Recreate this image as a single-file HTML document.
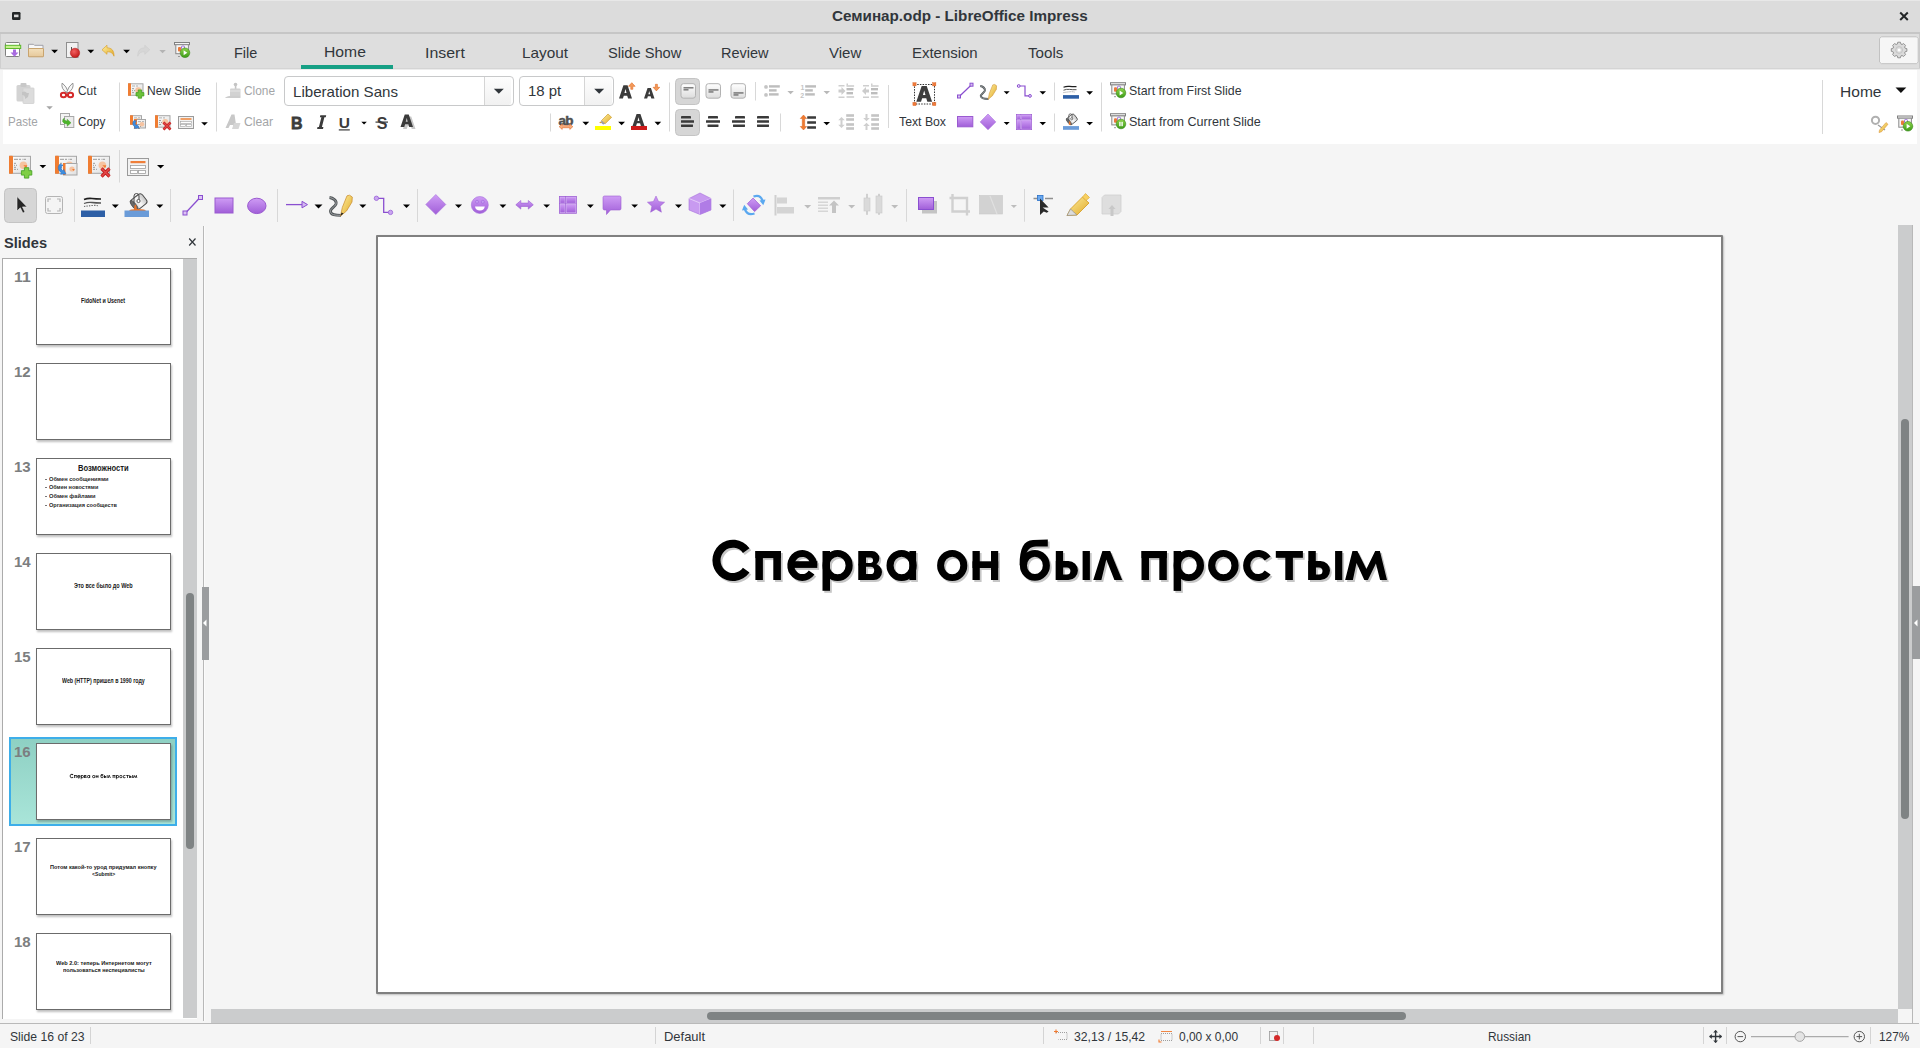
<!DOCTYPE html>
<html><head><meta charset="utf-8"><style>
html,body{margin:0;padding:0;}
body{width:1920px;height:1048px;overflow:hidden;position:relative;background:#f5f5f5;font-family:"Liberation Sans",sans-serif;}
body>div,body>span,body>svg{position:absolute;}
.t{white-space:nowrap;transform-origin:0 0;}
</style></head><body>
<div style="left:0px;top:0px;width:1920px;height:1px;background:#e8e8e8"></div>
<div style="left:0px;top:1px;width:1920px;height:31px;background:#dcdcdc"></div>
<div style="left:0px;top:32px;width:1920px;height:2px;background:#c6c6c6"></div>
<div style="left:0px;top:34px;width:1920px;height:35px;background:#dedede"></div>
<div style="left:0px;top:34px;width:1px;height:35px;background:#cfcfcf"></div>
<div style="left:1919px;top:34px;width:1px;height:35px;background:#cacaca"></div>
<div style="left:0px;top:68px;width:1920px;height:1px;background:#d4d4d4"></div>
<div style="left:0px;top:69px;width:1920px;height:1px;background:#ececec"></div>
<div style="left:301px;top:65px;width:92px;height:4px;background:#16a085"></div>
<div style="left:3px;top:70px;width:1914px;height:74px;background:#ffffff"></div>
<span class="t" style="left:832.40px;top:9.45px;font-size:14px;line-height:14px;font-weight:700;color:#31363b;transform:scaleX(1.0879);">Семинар.odp - LibreOffice Impress</span>
<span class="t" style="left:234.00px;top:45.30px;font-size:15px;line-height:15px;font-weight:400;color:#31363b;transform:scaleX(0.9642);">File</span>
<span class="t" style="left:323.70px;top:44.30px;font-size:15px;line-height:15px;font-weight:400;color:#31363b;transform:scaleX(1.0470);">Home</span>
<span class="t" style="left:425.40px;top:45.30px;font-size:15px;line-height:15px;font-weight:400;color:#31363b;transform:scaleX(1.0609);">Insert</span>
<span class="t" style="left:522.10px;top:45.30px;font-size:15px;line-height:15px;font-weight:400;color:#31363b;transform:scaleX(1.0227);">Layout</span>
<span class="t" style="left:608.00px;top:45.30px;font-size:15px;line-height:15px;font-weight:400;color:#31363b;transform:scaleX(0.9775);">Slide Show</span>
<span class="t" style="left:721.30px;top:45.30px;font-size:15px;line-height:15px;font-weight:400;color:#31363b;transform:scaleX(0.9669);">Review</span>
<span class="t" style="left:828.80px;top:45.30px;font-size:15px;line-height:15px;font-weight:400;color:#31363b;transform:scaleX(1.0006);">View</span>
<span class="t" style="left:912.20px;top:45.30px;font-size:15px;line-height:15px;font-weight:400;color:#31363b;transform:scaleX(0.9957);">Extension</span>
<span class="t" style="left:1027.80px;top:45.30px;font-size:15px;line-height:15px;font-weight:400;color:#31363b;transform:scaleX(1.0097);">Tools</span>
<span class="t" style="left:78.10px;top:83.57px;font-size:13.5px;line-height:13.5px;font-weight:400;color:#31363b;transform:scaleX(0.8807);">Cut</span>
<span class="t" style="left:78.10px;top:114.57px;font-size:13.5px;line-height:13.5px;font-weight:400;color:#31363b;transform:scaleX(0.8664);">Copy</span>
<span class="t" style="left:7.90px;top:114.97px;font-size:13.5px;line-height:13.5px;font-weight:400;color:#a3a5a7;transform:scaleX(0.8604);">Paste</span>
<span class="t" style="left:146.70px;top:83.57px;font-size:13.5px;line-height:13.5px;font-weight:400;color:#31363b;transform:scaleX(0.8885);">New Slide</span>
<span class="t" style="left:243.70px;top:83.57px;font-size:13.5px;line-height:13.5px;font-weight:400;color:#a3a5a7;transform:scaleX(0.8788);">Clone</span>
<span class="t" style="left:243.70px;top:114.57px;font-size:13.5px;line-height:13.5px;font-weight:400;color:#a3a5a7;transform:scaleX(0.9019);">Clear</span>
<span class="t" style="left:898.65px;top:114.82px;font-size:13.5px;line-height:13.5px;font-weight:400;color:#31363b;transform:scaleX(0.9078);">Text Box</span>
<span class="t" style="left:1128.90px;top:84.07px;font-size:13.5px;line-height:13.5px;font-weight:400;color:#31363b;transform:scaleX(0.9144);">Start from First Slide</span>
<span class="t" style="left:1128.90px;top:114.82px;font-size:13.5px;line-height:13.5px;font-weight:400;color:#31363b;transform:scaleX(0.9292);">Start from Current Slide</span>
<span class="t" style="left:1839.90px;top:84.30px;font-size:15px;line-height:15px;font-weight:400;color:#31363b;transform:scaleX(1.0370);">Home</span>
<div style="left:284px;top:76px;width:228px;height:28px;border:1px solid #c8c9ca;border-radius:4px;background:#fff"></div>
<div style="left:484px;top:77px;width:1px;height:28px;background:#d5d5d5"></div>
<div style="left:485px;top:77px;width:26px;height:28px;background:linear-gradient(#fdfdfd,#f1f1f1);border-radius:0 3px 3px 0"></div>
<span class="t" style="left:292.90px;top:83.60px;font-size:15px;line-height:15px;font-weight:400;color:#31363b;transform:scaleX(1.0073);">Liberation Sans</span>
<div style="left:519px;top:76px;width:93px;height:28px;border:1px solid #c8c9ca;border-radius:4px;background:#fff"></div>
<div style="left:584px;top:77px;width:1px;height:28px;background:#d5d5d5"></div>
<div style="left:585px;top:77px;width:27px;height:28px;background:linear-gradient(#fdfdfd,#f1f1f1);border-radius:0 3px 3px 0"></div>
<span class="t" style="left:528.15px;top:83.10px;font-size:15px;line-height:15px;font-weight:400;color:#31363b;transform:scaleX(0.9967);">18 pt</span>
<span class="t" style="left:3.60px;top:235.73px;font-size:14.5px;line-height:14.5px;font-weight:700;color:#31363b;transform:scaleX(1.0066);">Slides</span>
<div style="left:203px;top:226px;width:1px;height:795px;background:#b8b8b8"></div>
<div style="left:204px;top:226px;width:1px;height:795px;background:#fbfbfb"></div>
<div style="left:2px;top:258px;width:195px;height:761px;background:#ffffff;border-left:1px solid #ababab;box-sizing:border-box"></div>
<div style="left:183px;top:259px;width:14px;height:759px;background:#cbcccd"></div>
<div style="left:2px;top:258px;width:195px;height:1px;background:#ababab"></div>
<div style="left:186px;top:593px;width:7.5px;height:256px;background:#7f8384;border-radius:4px"></div>
<div style="left:202px;top:587px;width:7px;height:73px;background:#9b9d9f"></div>
<div style="left:36px;top:268px;width:135px;height:77px;background:#fff;border:1px solid #6b6b6b;box-sizing:border-box;box-shadow:1px 2px 2px rgba(0,0,0,0.25)"></div>
<span class="t" style="left:14.30px;top:270.15px;font-size:14px;line-height:14px;font-weight:700;color:#7c7e80;transform:scaleX(1.1285);">11</span>
<div style="left:36px;top:363px;width:135px;height:77px;background:#fff;border:1px solid #6b6b6b;box-sizing:border-box;box-shadow:1px 2px 2px rgba(0,0,0,0.25)"></div>
<span class="t" style="left:14.30px;top:365.15px;font-size:14px;line-height:14px;font-weight:700;color:#7c7e80;transform:scaleX(1.0727);">12</span>
<div style="left:36px;top:458px;width:135px;height:77px;background:#fff;border:1px solid #6b6b6b;box-sizing:border-box;box-shadow:1px 2px 2px rgba(0,0,0,0.25)"></div>
<span class="t" style="left:14.30px;top:460.15px;font-size:14px;line-height:14px;font-weight:700;color:#7c7e80;transform:scaleX(1.0727);">13</span>
<div style="left:36px;top:553px;width:135px;height:77px;background:#fff;border:1px solid #6b6b6b;box-sizing:border-box;box-shadow:1px 2px 2px rgba(0,0,0,0.25)"></div>
<span class="t" style="left:14.30px;top:555.15px;font-size:14px;line-height:14px;font-weight:700;color:#7c7e80;transform:scaleX(1.0727);">14</span>
<div style="left:36px;top:648px;width:135px;height:77px;background:#fff;border:1px solid #6b6b6b;box-sizing:border-box;box-shadow:1px 2px 2px rgba(0,0,0,0.25)"></div>
<span class="t" style="left:14.30px;top:650.15px;font-size:14px;line-height:14px;font-weight:700;color:#7c7e80;transform:scaleX(1.0727);">15</span>
<div style="left:9px;top:737px;width:168px;height:89px;background:linear-gradient(#8ed0c3,#a9e5d9);border:2px solid #3daee9;box-sizing:border-box"></div>
<div style="left:36px;top:743px;width:135px;height:77px;background:#fff;border:1px solid #6b6b6b;box-sizing:border-box;box-shadow:1px 2px 2px rgba(0,0,0,0.25)"></div>
<span class="t" style="left:14.30px;top:745.15px;font-size:14px;line-height:14px;font-weight:700;color:#7c7e80;transform:scaleX(1.0727);">16</span>
<div style="left:36px;top:838px;width:135px;height:77px;background:#fff;border:1px solid #6b6b6b;box-sizing:border-box;box-shadow:1px 2px 2px rgba(0,0,0,0.25)"></div>
<span class="t" style="left:14.30px;top:840.15px;font-size:14px;line-height:14px;font-weight:700;color:#7c7e80;transform:scaleX(1.0727);">17</span>
<div style="left:36px;top:933px;width:135px;height:77px;background:#fff;border:1px solid #6b6b6b;box-sizing:border-box;box-shadow:1px 2px 2px rgba(0,0,0,0.25)"></div>
<span class="t" style="left:14.30px;top:935.15px;font-size:14px;line-height:14px;font-weight:700;color:#7c7e80;transform:scaleX(1.0727);">18</span>
<span class="t" style="left:80.80px;top:297.91px;font-size:6.6px;line-height:6.6px;font-weight:700;color:#1a1a1a;transform:scaleX(0.8122);">FidoNet и Usenet</span>
<span class="t" style="left:77.70px;top:464.39px;font-size:8.4px;line-height:8.4px;font-weight:700;color:#1a1a1a;transform:scaleX(0.9042);">Возможности</span>
<span class="t" style="left:48.90px;top:477.09px;font-size:5.8px;line-height:5.8px;font-weight:700;color:#2a2a2a;transform:scaleX(0.9775);">Обмен сообщениями</span>
<div style="left:45px;top:479px;width:2px;height:1px;background:#777"></div>
<span class="t" style="left:48.90px;top:485.29px;font-size:5.8px;line-height:5.8px;font-weight:700;color:#2a2a2a;transform:scaleX(0.9489);">Обмен новостями</span>
<div style="left:45px;top:487px;width:2px;height:1px;background:#777"></div>
<span class="t" style="left:48.90px;top:494.09px;font-size:5.8px;line-height:5.8px;font-weight:700;color:#2a2a2a;transform:scaleX(0.9856);">Обмен файлами</span>
<div style="left:45px;top:496px;width:2px;height:1px;background:#777"></div>
<span class="t" style="left:48.90px;top:503.19px;font-size:5.8px;line-height:5.8px;font-weight:700;color:#2a2a2a;transform:scaleX(0.9632);">Организация сообществ</span>
<div style="left:45px;top:505px;width:2px;height:1px;background:#777"></div>
<span class="t" style="left:73.90px;top:583.01px;font-size:6.6px;line-height:6.6px;font-weight:700;color:#1a1a1a;transform:scaleX(0.8361);">Это все было до Web</span>
<span class="t" style="left:61.90px;top:678.11px;font-size:6.6px;line-height:6.6px;font-weight:700;color:#1a1a1a;transform:scaleX(0.8022);">Web (HTTP) пришел в 1990 году</span>
<span class="t" style="left:49.90px;top:864.42px;font-size:6.0px;line-height:6.0px;font-weight:700;color:#1a1a1a;transform:scaleX(0.9283);">Потом какой-то урод придумал кнопку</span>
<span class="t" style="left:91.50px;top:871.12px;font-size:6.0px;line-height:6.0px;font-weight:700;color:#1a1a1a;transform:scaleX(0.8522);">&lt;Submit&gt;</span>
<span class="t" style="left:55.70px;top:959.62px;font-size:6.0px;line-height:6.0px;font-weight:700;color:#1a1a1a;transform:scaleX(0.9321);">Web 2.0: теперь Интернетом могут</span>
<span class="t" style="left:62.80px;top:966.72px;font-size:6.0px;line-height:6.0px;font-weight:700;color:#1a1a1a;transform:scaleX(0.9077);">пользоваться неспециалисты</span>
<div style="left:376px;top:235px;width:1347px;height:759px;background:#fff;border:2px solid #808080;border-radius:1px;box-sizing:border-box;box-shadow:1px 1px 2px rgba(0,0,0,0.22)"></div>
<svg style="left:0;top:0;position:absolute" width="1920" height="1048" viewBox="0 0 1920 1048"><g transform="translate(1.8 2)" fill="#c6c6c6"><path d="M749.48 572.49A20.5 20.65 0 1 1 749.48 548.21L742.93 552.89A12.4 12.7 0 1 0 742.93 567.81Z" fill-rule="evenodd"/><path d="M755.40 551.00H780.90V558.10H755.40Z" fill-rule="evenodd"/><path d="M755.40 551.00H762.90V580.00H755.40Z" fill-rule="evenodd"/><path d="M773.30 551.00H780.90V580.00H773.30Z" fill-rule="evenodd"/><path d="M814.44 574.61A15.0 15.5 0 1 1 817.30 565.50L810.30 565.50A8.0 8.6 0 1 0 808.77 570.55Z" fill-rule="evenodd"/><path d="M794.00 561.20H817.30V567.90H794.00Z" fill-rule="evenodd"/><path d="M822.50 551.00H830.00V590.80H822.50Z" fill-rule="evenodd"/><path d="M822.50 565.50A15.10 15.50 0 1 1 852.70 565.50A15.10 15.50 0 1 1 822.50 565.50ZM829.60 565.50A8.00 8.70 0 1 0 845.60 565.50A8.00 8.70 0 1 0 829.60 565.50Z" fill-rule="evenodd"/><path d="M858.50 551.00H872.10A7.30 7.30 0 0 1 872.10 565.60H858.50ZM866.00 557.60V563.00H870.30A2.70 2.70 0 0 0 870.30 557.60Z" fill-rule="evenodd"/><path d="M858.50 563.80H873.90A8.10 8.10 0 0 1 873.90 580.00H858.50ZM866.00 566.80V574.00H870.60A3.60 3.60 0 0 0 870.60 566.80Z" fill-rule="evenodd"/><path d="M858.50 551.00H866.00V580.00H858.50Z" fill-rule="evenodd"/><path d="M886.50 565.50A15.10 15.50 0 1 1 916.70 565.50A15.10 15.50 0 1 1 886.50 565.50ZM893.60 565.50A8.00 8.70 0 1 0 909.60 565.50A8.00 8.70 0 1 0 893.60 565.50Z" fill-rule="evenodd"/><path d="M909.40 551.00H916.10V580.00H909.40Z" fill-rule="evenodd"/><path d="M937.10 565.50A15.10 15.60 0 1 1 967.30 565.50A15.10 15.60 0 1 1 937.10 565.50ZM944.10 565.50A8.10 8.70 0 1 0 960.30 565.50A8.10 8.70 0 1 0 944.10 565.50Z" fill-rule="evenodd"/><path d="M972.50 551.00H979.80V580.00H972.50Z" fill-rule="evenodd"/><path d="M991.00 551.00H998.20V580.00H991.00Z" fill-rule="evenodd"/><path d="M972.50 561.30H998.20V568.00H972.50Z" fill-rule="evenodd"/><path d="M1019.90 565.40A15.00 15.40 0 1 1 1049.90 565.40A15.00 15.40 0 1 1 1019.90 565.40ZM1027.00 565.40A7.90 8.70 0 1 0 1042.80 565.40A7.90 8.70 0 1 0 1027.00 565.40Z" fill-rule="evenodd"/><path d="M1047.8 539.5V546.4H1036C1030 546.6 1026.6 550 1025.4 557.5L1019.6 565.4C1019.6 548 1024 540.3 1033 540Z" fill-rule="evenodd"/><path d="M1055.80 551.00H1063.10V580.00H1055.80Z" fill-rule="evenodd"/><path d="M1055.80 561.00H1068.40A9.50 9.50 0 0 1 1068.40 580.00H1055.80ZM1063.10 567.50V574.60H1066.85A3.55 3.55 0 0 0 1066.85 567.50Z" fill-rule="evenodd"/><path d="M1082.60 551.00H1089.90V580.00H1082.60Z" fill-rule="evenodd"/><path d="M1093.3 580L1102.4 551H1110.2L1122.2 580H1114.4L1106.3 559.5L1101.4 580Z" fill-rule="evenodd"/><path d="M1141.50 551.00H1166.80V558.10H1141.50Z" fill-rule="evenodd"/><path d="M1141.50 551.00H1149.00V580.00H1141.50Z" fill-rule="evenodd"/><path d="M1159.30 551.00H1166.80V580.00H1159.30Z" fill-rule="evenodd"/><path d="M1173.60 551.00H1181.10V590.90H1173.60Z" fill-rule="evenodd"/><path d="M1173.60 565.50A15.20 15.50 0 1 1 1204.00 565.50A15.20 15.50 0 1 1 1173.60 565.50ZM1180.80 565.50A8.00 8.70 0 1 0 1196.80 565.50A8.00 8.70 0 1 0 1180.80 565.50Z" fill-rule="evenodd"/><path d="M1208.10 565.50A15.25 15.60 0 1 1 1238.60 565.50A15.25 15.60 0 1 1 1208.10 565.50ZM1215.25 565.50A8.10 8.70 0 1 0 1231.45 565.50A8.10 8.70 0 1 0 1215.25 565.50Z" fill-rule="evenodd"/><path d="M1270.60 574.61A15.2 15.5 0 1 1 1270.60 556.39L1264.77 560.45A8.0 8.6 0 1 0 1264.77 570.55Z" fill-rule="evenodd"/><path d="M1275.80 551.00H1302.90V557.80H1275.80Z" fill-rule="evenodd"/><path d="M1285.30 551.00H1292.90V580.00H1285.30Z" fill-rule="evenodd"/><path d="M1308.30 551.00H1315.80V580.00H1308.30Z" fill-rule="evenodd"/><path d="M1308.30 561.00H1320.50A9.50 9.50 0 0 1 1320.50 580.00H1308.30ZM1315.80 567.50V574.60H1318.95A3.55 3.55 0 0 0 1318.95 567.50Z" fill-rule="evenodd"/><path d="M1335.10 551.00H1342.30V580.00H1335.10Z" fill-rule="evenodd"/><path d="M1345.15 580L1352.45 551H1357.4L1366.4 569L1375.2 551H1379.9L1387 580H1380.1L1375.9 563.5L1367.9 580H1364.3L1356.5 563L1352.9 580Z" fill-rule="evenodd"/></g><g fill="#000"><path d="M749.48 572.49A20.5 20.65 0 1 1 749.48 548.21L742.93 552.89A12.4 12.7 0 1 0 742.93 567.81Z" fill-rule="evenodd"/><path d="M755.40 551.00H780.90V558.10H755.40Z" fill-rule="evenodd"/><path d="M755.40 551.00H762.90V580.00H755.40Z" fill-rule="evenodd"/><path d="M773.30 551.00H780.90V580.00H773.30Z" fill-rule="evenodd"/><path d="M814.44 574.61A15.0 15.5 0 1 1 817.30 565.50L810.30 565.50A8.0 8.6 0 1 0 808.77 570.55Z" fill-rule="evenodd"/><path d="M794.00 561.20H817.30V567.90H794.00Z" fill-rule="evenodd"/><path d="M822.50 551.00H830.00V590.80H822.50Z" fill-rule="evenodd"/><path d="M822.50 565.50A15.10 15.50 0 1 1 852.70 565.50A15.10 15.50 0 1 1 822.50 565.50ZM829.60 565.50A8.00 8.70 0 1 0 845.60 565.50A8.00 8.70 0 1 0 829.60 565.50Z" fill-rule="evenodd"/><path d="M858.50 551.00H872.10A7.30 7.30 0 0 1 872.10 565.60H858.50ZM866.00 557.60V563.00H870.30A2.70 2.70 0 0 0 870.30 557.60Z" fill-rule="evenodd"/><path d="M858.50 563.80H873.90A8.10 8.10 0 0 1 873.90 580.00H858.50ZM866.00 566.80V574.00H870.60A3.60 3.60 0 0 0 870.60 566.80Z" fill-rule="evenodd"/><path d="M858.50 551.00H866.00V580.00H858.50Z" fill-rule="evenodd"/><path d="M886.50 565.50A15.10 15.50 0 1 1 916.70 565.50A15.10 15.50 0 1 1 886.50 565.50ZM893.60 565.50A8.00 8.70 0 1 0 909.60 565.50A8.00 8.70 0 1 0 893.60 565.50Z" fill-rule="evenodd"/><path d="M909.40 551.00H916.10V580.00H909.40Z" fill-rule="evenodd"/><path d="M937.10 565.50A15.10 15.60 0 1 1 967.30 565.50A15.10 15.60 0 1 1 937.10 565.50ZM944.10 565.50A8.10 8.70 0 1 0 960.30 565.50A8.10 8.70 0 1 0 944.10 565.50Z" fill-rule="evenodd"/><path d="M972.50 551.00H979.80V580.00H972.50Z" fill-rule="evenodd"/><path d="M991.00 551.00H998.20V580.00H991.00Z" fill-rule="evenodd"/><path d="M972.50 561.30H998.20V568.00H972.50Z" fill-rule="evenodd"/><path d="M1019.90 565.40A15.00 15.40 0 1 1 1049.90 565.40A15.00 15.40 0 1 1 1019.90 565.40ZM1027.00 565.40A7.90 8.70 0 1 0 1042.80 565.40A7.90 8.70 0 1 0 1027.00 565.40Z" fill-rule="evenodd"/><path d="M1047.8 539.5V546.4H1036C1030 546.6 1026.6 550 1025.4 557.5L1019.6 565.4C1019.6 548 1024 540.3 1033 540Z" fill-rule="evenodd"/><path d="M1055.80 551.00H1063.10V580.00H1055.80Z" fill-rule="evenodd"/><path d="M1055.80 561.00H1068.40A9.50 9.50 0 0 1 1068.40 580.00H1055.80ZM1063.10 567.50V574.60H1066.85A3.55 3.55 0 0 0 1066.85 567.50Z" fill-rule="evenodd"/><path d="M1082.60 551.00H1089.90V580.00H1082.60Z" fill-rule="evenodd"/><path d="M1093.3 580L1102.4 551H1110.2L1122.2 580H1114.4L1106.3 559.5L1101.4 580Z" fill-rule="evenodd"/><path d="M1141.50 551.00H1166.80V558.10H1141.50Z" fill-rule="evenodd"/><path d="M1141.50 551.00H1149.00V580.00H1141.50Z" fill-rule="evenodd"/><path d="M1159.30 551.00H1166.80V580.00H1159.30Z" fill-rule="evenodd"/><path d="M1173.60 551.00H1181.10V590.90H1173.60Z" fill-rule="evenodd"/><path d="M1173.60 565.50A15.20 15.50 0 1 1 1204.00 565.50A15.20 15.50 0 1 1 1173.60 565.50ZM1180.80 565.50A8.00 8.70 0 1 0 1196.80 565.50A8.00 8.70 0 1 0 1180.80 565.50Z" fill-rule="evenodd"/><path d="M1208.10 565.50A15.25 15.60 0 1 1 1238.60 565.50A15.25 15.60 0 1 1 1208.10 565.50ZM1215.25 565.50A8.10 8.70 0 1 0 1231.45 565.50A8.10 8.70 0 1 0 1215.25 565.50Z" fill-rule="evenodd"/><path d="M1270.60 574.61A15.2 15.5 0 1 1 1270.60 556.39L1264.77 560.45A8.0 8.6 0 1 0 1264.77 570.55Z" fill-rule="evenodd"/><path d="M1275.80 551.00H1302.90V557.80H1275.80Z" fill-rule="evenodd"/><path d="M1285.30 551.00H1292.90V580.00H1285.30Z" fill-rule="evenodd"/><path d="M1308.30 551.00H1315.80V580.00H1308.30Z" fill-rule="evenodd"/><path d="M1308.30 561.00H1320.50A9.50 9.50 0 0 1 1320.50 580.00H1308.30ZM1315.80 567.50V574.60H1318.95A3.55 3.55 0 0 0 1318.95 567.50Z" fill-rule="evenodd"/><path d="M1335.10 551.00H1342.30V580.00H1335.10Z" fill-rule="evenodd"/><path d="M1345.15 580L1352.45 551H1357.4L1366.4 569L1375.2 551H1379.9L1387 580H1380.1L1375.9 563.5L1367.9 580H1364.3L1356.5 563L1352.9 580Z" fill-rule="evenodd"/></g><g transform="translate(36 743) scale(0.1002 0.1016) translate(-376 -235)" fill="#111"><path d="M749.48 572.49A20.5 20.65 0 1 1 749.48 548.21L742.93 552.89A12.4 12.7 0 1 0 742.93 567.81Z" fill-rule="evenodd"/><path d="M755.40 551.00H780.90V558.10H755.40Z" fill-rule="evenodd"/><path d="M755.40 551.00H762.90V580.00H755.40Z" fill-rule="evenodd"/><path d="M773.30 551.00H780.90V580.00H773.30Z" fill-rule="evenodd"/><path d="M814.44 574.61A15.0 15.5 0 1 1 817.30 565.50L810.30 565.50A8.0 8.6 0 1 0 808.77 570.55Z" fill-rule="evenodd"/><path d="M794.00 561.20H817.30V567.90H794.00Z" fill-rule="evenodd"/><path d="M822.50 551.00H830.00V590.80H822.50Z" fill-rule="evenodd"/><path d="M822.50 565.50A15.10 15.50 0 1 1 852.70 565.50A15.10 15.50 0 1 1 822.50 565.50ZM829.60 565.50A8.00 8.70 0 1 0 845.60 565.50A8.00 8.70 0 1 0 829.60 565.50Z" fill-rule="evenodd"/><path d="M858.50 551.00H872.10A7.30 7.30 0 0 1 872.10 565.60H858.50ZM866.00 557.60V563.00H870.30A2.70 2.70 0 0 0 870.30 557.60Z" fill-rule="evenodd"/><path d="M858.50 563.80H873.90A8.10 8.10 0 0 1 873.90 580.00H858.50ZM866.00 566.80V574.00H870.60A3.60 3.60 0 0 0 870.60 566.80Z" fill-rule="evenodd"/><path d="M858.50 551.00H866.00V580.00H858.50Z" fill-rule="evenodd"/><path d="M886.50 565.50A15.10 15.50 0 1 1 916.70 565.50A15.10 15.50 0 1 1 886.50 565.50ZM893.60 565.50A8.00 8.70 0 1 0 909.60 565.50A8.00 8.70 0 1 0 893.60 565.50Z" fill-rule="evenodd"/><path d="M909.40 551.00H916.10V580.00H909.40Z" fill-rule="evenodd"/><path d="M937.10 565.50A15.10 15.60 0 1 1 967.30 565.50A15.10 15.60 0 1 1 937.10 565.50ZM944.10 565.50A8.10 8.70 0 1 0 960.30 565.50A8.10 8.70 0 1 0 944.10 565.50Z" fill-rule="evenodd"/><path d="M972.50 551.00H979.80V580.00H972.50Z" fill-rule="evenodd"/><path d="M991.00 551.00H998.20V580.00H991.00Z" fill-rule="evenodd"/><path d="M972.50 561.30H998.20V568.00H972.50Z" fill-rule="evenodd"/><path d="M1019.90 565.40A15.00 15.40 0 1 1 1049.90 565.40A15.00 15.40 0 1 1 1019.90 565.40ZM1027.00 565.40A7.90 8.70 0 1 0 1042.80 565.40A7.90 8.70 0 1 0 1027.00 565.40Z" fill-rule="evenodd"/><path d="M1047.8 539.5V546.4H1036C1030 546.6 1026.6 550 1025.4 557.5L1019.6 565.4C1019.6 548 1024 540.3 1033 540Z" fill-rule="evenodd"/><path d="M1055.80 551.00H1063.10V580.00H1055.80Z" fill-rule="evenodd"/><path d="M1055.80 561.00H1068.40A9.50 9.50 0 0 1 1068.40 580.00H1055.80ZM1063.10 567.50V574.60H1066.85A3.55 3.55 0 0 0 1066.85 567.50Z" fill-rule="evenodd"/><path d="M1082.60 551.00H1089.90V580.00H1082.60Z" fill-rule="evenodd"/><path d="M1093.3 580L1102.4 551H1110.2L1122.2 580H1114.4L1106.3 559.5L1101.4 580Z" fill-rule="evenodd"/><path d="M1141.50 551.00H1166.80V558.10H1141.50Z" fill-rule="evenodd"/><path d="M1141.50 551.00H1149.00V580.00H1141.50Z" fill-rule="evenodd"/><path d="M1159.30 551.00H1166.80V580.00H1159.30Z" fill-rule="evenodd"/><path d="M1173.60 551.00H1181.10V590.90H1173.60Z" fill-rule="evenodd"/><path d="M1173.60 565.50A15.20 15.50 0 1 1 1204.00 565.50A15.20 15.50 0 1 1 1173.60 565.50ZM1180.80 565.50A8.00 8.70 0 1 0 1196.80 565.50A8.00 8.70 0 1 0 1180.80 565.50Z" fill-rule="evenodd"/><path d="M1208.10 565.50A15.25 15.60 0 1 1 1238.60 565.50A15.25 15.60 0 1 1 1208.10 565.50ZM1215.25 565.50A8.10 8.70 0 1 0 1231.45 565.50A8.10 8.70 0 1 0 1215.25 565.50Z" fill-rule="evenodd"/><path d="M1270.60 574.61A15.2 15.5 0 1 1 1270.60 556.39L1264.77 560.45A8.0 8.6 0 1 0 1264.77 570.55Z" fill-rule="evenodd"/><path d="M1275.80 551.00H1302.90V557.80H1275.80Z" fill-rule="evenodd"/><path d="M1285.30 551.00H1292.90V580.00H1285.30Z" fill-rule="evenodd"/><path d="M1308.30 551.00H1315.80V580.00H1308.30Z" fill-rule="evenodd"/><path d="M1308.30 561.00H1320.50A9.50 9.50 0 0 1 1320.50 580.00H1308.30ZM1315.80 567.50V574.60H1318.95A3.55 3.55 0 0 0 1318.95 567.50Z" fill-rule="evenodd"/><path d="M1335.10 551.00H1342.30V580.00H1335.10Z" fill-rule="evenodd"/><path d="M1345.15 580L1352.45 551H1357.4L1366.4 569L1375.2 551H1379.9L1387 580H1380.1L1375.9 563.5L1367.9 580H1364.3L1356.5 563L1352.9 580Z" fill-rule="evenodd"/></g></svg>
<div style="left:211px;top:1009px;width:1687px;height:14px;background:#cbcccd"></div>
<div style="left:707px;top:1012px;width:699px;height:8px;background:#7f8384;border-radius:4px"></div>
<div style="left:1898px;top:225px;width:14px;height:784px;background:#cbcccd"></div>
<div style="left:1912px;top:225px;width:1px;height:798px;background:#b8b8b8"></div>
<div style="left:1901px;top:419px;width:8px;height:400px;background:#7f8384;border-radius:4px"></div>
<div style="left:1912px;top:586px;width:8px;height:73px;background:#9b9d9f"></div>
<div style="left:0px;top:1023px;width:1919px;height:1px;background:#b9b9b9"></div>
<span class="t" style="left:10.20px;top:1029.67px;font-size:13.5px;line-height:13.5px;font-weight:400;color:#31363b;transform:scaleX(0.9023);">Slide 16 of 23</span>
<span class="t" style="left:664.40px;top:1029.87px;font-size:13.5px;line-height:13.5px;font-weight:400;color:#31363b;transform:scaleX(0.9587);">Default</span>
<span class="t" style="left:1073.60px;top:1029.87px;font-size:13.5px;line-height:13.5px;font-weight:400;color:#31363b;transform:scaleX(0.9021);">32,13 / 15,42</span>
<span class="t" style="left:1178.60px;top:1029.87px;font-size:13.5px;line-height:13.5px;font-weight:400;color:#31363b;transform:scaleX(0.8848);">0,00 x 0,00</span>
<span class="t" style="left:1487.70px;top:1029.87px;font-size:13.5px;line-height:13.5px;font-weight:400;color:#31363b;transform:scaleX(0.8795);">Russian</span>
<span class="t" style="left:1878.70px;top:1029.87px;font-size:13.5px;line-height:13.5px;font-weight:400;color:#31363b;transform:scaleX(0.8803);">127%</span>
<div style="left:90px;top:1027px;width:1px;height:17px;background:#d4d4d4"></div>
<div style="left:655px;top:1027px;width:1px;height:17px;background:#d4d4d4"></div>
<div style="left:1043px;top:1027px;width:1px;height:17px;background:#d4d4d4"></div>
<div style="left:1260px;top:1027px;width:1px;height:17px;background:#d4d4d4"></div>
<div style="left:1283px;top:1027px;width:1px;height:17px;background:#d4d4d4"></div>
<div style="left:1313px;top:1027px;width:1px;height:17px;background:#d4d4d4"></div>
<div style="left:1703px;top:1027px;width:1px;height:17px;background:#d4d4d4"></div>
<div style="left:1726px;top:1027px;width:1px;height:17px;background:#d4d4d4"></div>
<div style="left:1870px;top:1027px;width:1px;height:17px;background:#d4d4d4"></div>
<svg style="left:0;top:0;position:absolute" width="1920" height="1048" viewBox="0 0 1920 1048"><defs>
<linearGradient id="gpur" x1="0" y1="0" x2="0" y2="1"><stop offset="0" stop-color="#cf9cf5"/><stop offset="1" stop-color="#a05ed8"/></linearGradient>
<linearGradient id="ggreen" x1="0" y1="0" x2="0" y2="1"><stop offset="0" stop-color="#8fd44a"/><stop offset="1" stop-color="#3a9a18"/></linearGradient>
<linearGradient id="gbtn" x1="0" y1="0" x2="0" y2="1"><stop offset="0" stop-color="#ffffff"/><stop offset="1" stop-color="#dcdcdc"/></linearGradient>
<linearGradient id="gfold" x1="0" y1="0" x2="0" y2="1"><stop offset="0" stop-color="#f3e0bd"/><stop offset="1" stop-color="#e6c89a"/></linearGradient>
<radialGradient id="gred" cx="0.4" cy="0.35" r="0.7"><stop offset="0" stop-color="#f26060"/><stop offset="1" stop-color="#c01818"/></radialGradient>
<linearGradient id="gslide" x1="0" y1="0" x2="1" y2="1"><stop offset="0" stop-color="#ffffff"/><stop offset="1" stop-color="#dedede"/></linearGradient>
<linearGradient id="gbucket" x1="0" y1="0" x2="1" y2="0"><stop offset="0" stop-color="#d0d0d0"/><stop offset="0.5" stop-color="#f8f8f8"/><stop offset="1" stop-color="#c4c4c4"/></linearGradient>
<linearGradient id="gyel" x1="0" y1="0" x2="1" y2="1"><stop offset="0" stop-color="#fff0a0"/><stop offset="1" stop-color="#e0a828"/></linearGradient>
</defs><rect x="12" y="12" width="8.5" height="8" rx="1.2" fill="#232627" stroke="none" stroke-width="1" /><rect x="14" y="14.6" width="4.5" height="2.6" rx="0" fill="#d8d8d8" stroke="none" stroke-width="1" /><path d="M1900.2 12.5L1907.8 20M1907.8 12.5L1900.2 20" fill="none" stroke="#232627" stroke-width="2" /><rect x="5.5" y="42.5" width="14" height="14" rx="1" fill="#fff" stroke="#808080" stroke-width="1" /><rect x="5.3" y="45.3" width="15.4" height="3.2" rx="0" fill="#c8f090" stroke="#5cb82a" stroke-width="1" /><path d="M13 49.5h3v3h2.5l-4 4.3l-4 -4.3h2.5z" fill="#a86be0" stroke="none" stroke-width="1" /><path d="M28.5 56.5V44.3h5l1 1h8.5v11.2z" fill="#f7f7f7" stroke="#a0a0a8" stroke-width="1" /><rect x="28.5" y="48.5" width="15" height="8.3" rx="0.5" fill="url(#gfold)" stroke="#c9a46e" stroke-width="1" /><path d="M51.2 49.8H58L54.6 53.199999999999996Z" fill="#000"/><rect x="66.5" y="42.5" width="11.5" height="15" rx="0" fill="#f2f2f2" stroke="#8f8f8f" stroke-width="1" /><rect x="71" y="47" width="1" height="4" rx="0" fill="#555" stroke="none" stroke-width="1" /><circle cx="75" cy="52.9" r="4.7" fill="url(#gred)" stroke="#b01a1a" stroke-width="0.5" /><path d="M87.4 49.8H94.2L90.80000000000001 53.199999999999996Z" fill="#000"/><path d="M102 49.8L107 45.2V47.8C111.5 47.8 114.2 50.5 114 56.2C112.5 52.5 110.5 51.8 107 51.8V54.3Z" fill="url(#gyel)" stroke="#d99a20" stroke-width="0.6" /><path d="M123.2 49.8H130L126.6 53.199999999999996Z" fill="#000"/><path d="M149.8 49.8L144.8 45.2V47.8C140.3 47.8 137.6 50.5 137.8 56.2C139.3 52.5 141.3 51.8 144.8 51.8V54.3Z" fill="#d6d6d6" stroke="#cdcdcd" stroke-width="0.6" /><path d="M159.3 50H165.8L162.55 53.25Z" fill="#b4b4b4"/><rect x="174.5" y="42.5" width="15" height="2.2" rx="0" fill="#f4f4f4" stroke="#808080" stroke-width="1" /><rect x="175.8" y="44.7" width="12.6" height="9" rx="0" fill="#f6f6f6" stroke="#8a8a8a" stroke-width="1" /><rect x="178" y="47" width="3" height="4.5" rx="1" fill="#e9793a" stroke="none" stroke-width="1" /><rect x="181.5" y="46" width="3" height="3.5" rx="1" fill="none" stroke="#9b6fd6" stroke-width="1" /><circle cx="185" cy="52.8" r="4.8" fill="url(#ggreen)" stroke="#3a8a1a" stroke-width="0.6" /><path d="M183.6 50.3L187.3 52.8L183.6 55.3Z" fill="#fff" stroke="none" stroke-width="1" /><path d="M178 56.5h2" fill="none" stroke="#999" stroke-width="1" /><path d="M1881.5 36.8H1916.5L1918.2 38.5V62L1916.5 63.7H1881.5L1879.5 62V38.5Z" fill="#f6f6f6" stroke="#c2c2c2" stroke-width="1" /><path d="M1905.02 48.17L1906.89 48.66L1906.89 51.34L1905.02 51.83L1904.58 52.89L1905.55 54.56L1903.66 56.45L1901.99 55.48L1900.93 55.92L1900.44 57.79L1897.76 57.79L1897.27 55.92L1896.21 55.48L1894.54 56.45L1892.65 54.56L1893.62 52.89L1893.18 51.83L1891.31 51.34L1891.31 48.66L1893.18 48.17L1893.62 47.11L1892.65 45.44L1894.54 43.55L1896.21 44.52L1897.27 44.08L1897.76 42.21L1900.44 42.21L1900.93 44.08L1901.99 44.52L1903.66 43.55L1905.55 45.44L1904.58 47.11Z" fill="#dadada" stroke="#8a8a8a" stroke-width="0.9" /><circle cx="1899.1" cy="50" r="3.4" fill="none" stroke="#c4c4c4" stroke-width="1" /><circle cx="1899.1" cy="50" r="1.5" fill="#ffffff" stroke="none" stroke-width="1" /><rect x="16.5" y="85" width="14" height="16.5" rx="1.5" fill="#d3d3d3" stroke="none" stroke-width="1" /><rect x="20.5" y="83" width="6" height="4" rx="1" fill="#c8c8c8" stroke="none" stroke-width="1" /><rect x="23" y="88" width="11" height="15.5" rx="0.8" fill="#dcdcdc" stroke="#cfcfcf" stroke-width="0.8" /><path d="M22 92a4 4 0 0 1 5 1h2l-1 4l-3 2v-2a3 3 0 0 0 -3 -2z" fill="#c4c4c4" stroke="none" stroke-width="1" /><path d="M46.3 106.2H52.8L49.55 109.45Z" fill="#a6a6a6"/><path d="M62.2 83Q60.5 88.5 67 93L68.2 91.8Q66.5 86.5 62.2 83Z" fill="#f6f6f6" stroke="#8a8a8a" stroke-width="0.9" /><path d="M72.8 83Q74.5 88.5 68 93L66.8 91.8Q68.5 86.5 72.8 83Z" fill="#f6f6f6" stroke="#8a8a8a" stroke-width="0.9" /><ellipse cx="63.5" cy="95" rx="2.6" ry="2.2" fill="none" stroke="#d42a2a" stroke-width="2"/><ellipse cx="70.5" cy="95" rx="2.6" ry="2.2" fill="none" stroke="#d42a2a" stroke-width="2"/><rect x="60.5" y="113.5" width="9" height="11" rx="0" fill="#f4f4f4" stroke="#a8a8a8" stroke-width="1" /><rect x="64.5" y="116.5" width="9.3" height="11" rx="0" fill="#ececec" stroke="#a8a8a8" stroke-width="1" /><path d="M62.5 121.5q0 -2.5 1.8 -3.5l-0.4 2q2 0.5 3.3 1.2v-2l3.8 3.6l-3.8 3.4v-2.2q-3.5 0 -4.7 -2.5z" fill="#4cb42a" stroke="#3a9420" stroke-width="0.4" /><rect x="119" y="82.5" width="1" height="49.0" rx="0" fill="#d8d8d8" stroke="none" stroke-width="1" /><rect x="128.5" y="83.8" width="14.5" height="11.5" rx="0" fill="url(#gslide)" stroke="#a6a6a6" stroke-width="1" /><rect x="128" y="83.3" width="3" height="12.5" rx="0.5" fill="#f07d32" stroke="none" stroke-width="1" /><rect x="132" y="85.6" width="3" height="0.8" rx="0" fill="#a0a0a0" stroke="none" stroke-width="1" /><rect x="136" y="85.6" width="2" height="0.8" rx="0" fill="#a0a0a0" stroke="none" stroke-width="1" /><rect x="132" y="88.3" width="2" height="0.8" rx="0" fill="#8a8a8a" stroke="none" stroke-width="1" /><rect x="132" y="90.3" width="1" height="0.8" rx="0" fill="#8a8a8a" stroke="none" stroke-width="1" /><rect x="134" y="90.3" width="1" height="0.8" rx="0" fill="#8a8a8a" stroke="none" stroke-width="1" /><rect x="132" y="92.3" width="2" height="0.8" rx="0" fill="#8a8a8a" stroke="none" stroke-width="1" /><circle cx="138.23" cy="90.175" r="3.0" fill="#f6c3a0" stroke="none" stroke-width="1" /><path d="M138.2 89.9h3.4v2.7h2.3v3.4h-2.3v2.2h-3.4v-2.2h-2.2v-3.4h2.2z" fill="#6cc23a" stroke="#3d9a1e" stroke-width="0.7" /><rect x="130.5" y="115.7" width="11" height="8.5" rx="0" fill="url(#gslide)" stroke="#a6a6a6" stroke-width="1" /><rect x="130" y="115.2" width="3" height="9.5" rx="0.5" fill="#f07d32" stroke="none" stroke-width="1" /><rect x="134" y="117.5" width="3" height="0.8" rx="0" fill="#a0a0a0" stroke="none" stroke-width="1" /><rect x="138" y="117.5" width="2" height="0.8" rx="0" fill="#a0a0a0" stroke="none" stroke-width="1" /><rect x="134" y="120.2" width="2" height="0.8" rx="0" fill="#8a8a8a" stroke="none" stroke-width="1" /><rect x="134" y="122.2" width="1" height="0.8" rx="0" fill="#8a8a8a" stroke="none" stroke-width="1" /><rect x="136" y="122.2" width="1" height="0.8" rx="0" fill="#8a8a8a" stroke="none" stroke-width="1" /><rect x="134" y="124.2" width="2" height="0.8" rx="0" fill="#8a8a8a" stroke="none" stroke-width="1" /><circle cx="137.92" cy="120.425" r="2.28" fill="#f6c3a0" stroke="none" stroke-width="1" /><rect x="134.5" y="119.5" width="11" height="8.5" rx="0" fill="url(#gslide)" stroke="#a6a6a6" stroke-width="1" /><rect x="134" y="119" width="3" height="9.5" rx="0.5" fill="#f07d32" stroke="none" stroke-width="1" /><rect x="138" y="121.3" width="3" height="0.8" rx="0" fill="#a0a0a0" stroke="none" stroke-width="1" /><rect x="142" y="121.3" width="2" height="0.8" rx="0" fill="#a0a0a0" stroke="none" stroke-width="1" /><rect x="138" y="124" width="2" height="0.8" rx="0" fill="#8a8a8a" stroke="none" stroke-width="1" /><rect x="138" y="126" width="1" height="0.8" rx="0" fill="#8a8a8a" stroke="none" stroke-width="1" /><rect x="140" y="126" width="1" height="0.8" rx="0" fill="#8a8a8a" stroke="none" stroke-width="1" /><rect x="138" y="128" width="2" height="0.8" rx="0" fill="#8a8a8a" stroke="none" stroke-width="1" /><circle cx="141.92" cy="124.225" r="2.28" fill="#f6c3a0" stroke="none" stroke-width="1" /><path d="M134 120.5a4 4 0 0 0 1 6.5l-0.8 1.5l4.8 -0.5l-1.8 -3.8l-0.6 1.2a2.5 2.5 0 0 1 0 -4.5z" fill="#3d8ee0" stroke="#2a6fc0" stroke-width="0.5" /><rect x="155.5" y="115.7" width="14.5" height="11.5" rx="0" fill="url(#gslide)" stroke="#a6a6a6" stroke-width="1" /><rect x="155" y="115.2" width="3" height="12.5" rx="0.5" fill="#f07d32" stroke="none" stroke-width="1" /><rect x="159" y="117.5" width="3" height="0.8" rx="0" fill="#a0a0a0" stroke="none" stroke-width="1" /><rect x="163" y="117.5" width="2" height="0.8" rx="0" fill="#a0a0a0" stroke="none" stroke-width="1" /><rect x="159" y="120.2" width="2" height="0.8" rx="0" fill="#8a8a8a" stroke="none" stroke-width="1" /><rect x="159" y="122.2" width="1" height="0.8" rx="0" fill="#8a8a8a" stroke="none" stroke-width="1" /><rect x="161" y="122.2" width="1" height="0.8" rx="0" fill="#8a8a8a" stroke="none" stroke-width="1" /><rect x="159" y="124.2" width="2" height="0.8" rx="0" fill="#8a8a8a" stroke="none" stroke-width="1" /><circle cx="165.23" cy="122.075" r="3.0" fill="#f6c3a0" stroke="none" stroke-width="1" /><path d="M163.5 122.5l7 7M170.5 122.5l-7 7" fill="none" stroke="#c21c1c" stroke-width="2.6" /><path d="M163.5 122.5l7 7M170.5 122.5l-7 7" fill="none" stroke="#e04848" stroke-width="1.2" /><rect x="178.5" y="116.5" width="15" height="12" rx="0" fill="#f2f2f2" stroke="#9a9a9a" stroke-width="1" /><rect x="180.5" y="118.2" width="11" height="1.6" rx="0" fill="#ee8a44" stroke="none" stroke-width="1" /><rect x="180.5" y="121.3" width="11" height="2" rx="0" fill="#fff" stroke="#a0a0a0" stroke-width="0.6" /><rect x="180.5" y="124.5" width="5" height="2" rx="0" fill="#fff" stroke="#a0a0a0" stroke-width="0.6" /><rect x="186.5" y="124.5" width="5" height="2" rx="0" fill="#fff" stroke="#a0a0a0" stroke-width="0.6" /><path d="M201.2 122.2H207.8L204.5 125.50000000000001Z" fill="#000"/><rect x="216" y="82.5" width="1" height="49.0" rx="0" fill="#d8d8d8" stroke="none" stroke-width="1" /><circle cx="235.5" cy="84.5" r="1.8" fill="#c4c4c4" stroke="none" stroke-width="1" /><rect x="234.8" y="85.5" width="1.6" height="4" rx="0" fill="#c4c4c4" stroke="none" stroke-width="1" /><rect x="230" y="88.5" width="10.5" height="8" rx="1" fill="#d2d2d2" stroke="none" stroke-width="1" /><rect x="230" y="90.5" width="10.5" height="1" rx="0" fill="#e6e6e6" stroke="none" stroke-width="1" /><path d="M225 97.5q3 -1.8 6 -1.8h9.5v2.3h-13q-2 0 -2.5 -0.5z" fill="#cdcdcd" stroke="none" stroke-width="1" /><path d="M225.5 128L231.5 114.5H234.5L236.5 128H233.5L233 125H230L228.5 128Z" fill="#c8c8c8" stroke="none" stroke-width="1" /><path d="M234 123h6.5l-2 6h-6.5z" fill="#d6d6d6" stroke="none" stroke-width="1" /><g transform="translate(291.9 115.2) scale(1 1.08) translate(-291.9 -115.2)"><text x="290.9" y="128.1" font-size="16" font-weight="700" fill="#3b3b3b" font-family="Liberation Sans" stroke="#3b3b3b" stroke-width="0.7">B</text></g><path d="M320.3 115.2H326.2L325.8 117.2H324.4L321.9 126.9H323.4L323 128.9H317.1L317.5 126.9H318.9L321.4 117.2H319.9Z" fill="#3b3b3b" stroke="none" stroke-width="1" /><text x="338.8" y="127.8" font-size="15.5" font-weight="700" fill="#3b3b3b" font-family="Liberation Sans" >U</text><rect x="338.8" y="129.3" width="11" height="1.2" rx="0" fill="#3b3b3b" stroke="none" stroke-width="1" /><path d="M361.3 121.8H366.8L364.05 124.55Z" fill="#000"/><text x="376.8" y="128.5" font-size="16" font-weight="700" fill="#3b3b3b" font-family="Liberation Sans" >S</text><rect x="375.5" y="121.5" width="12.5" height="1.2" rx="0" fill="#3b3b3b" stroke="none" stroke-width="1" /><path d="M403 129.0L407.25 116.5H411.25L415.5 129.0H411.75L410.875 126.25H407.625L406.75 129.0ZM408.25 123.75H410.25L409.25 120.0Z" fill="#c8c8c8" stroke="none" stroke-width="1" fill-rule="evenodd"/><path d="M400.5 127.0L404.75 114.5H408.75L413.0 127.0H409.25L408.375 124.25H405.125L404.25 127.0ZM405.75 121.75H407.75L406.75 118.0Z" fill="#3b3b3b" stroke="none" stroke-width="1" fill-rule="evenodd"/><path d="M493.8 88.8H503.8L498.8 93.8Z" fill="#31363b"/><path d="M594.2 88.8H604.2L599.2 93.8Z" fill="#31363b"/><path d="M619 98.60000000000001L623.42 85.2H627.58L632 98.60000000000001H628.1L627.19 95.652H623.81L622.9 98.60000000000001ZM624.46 92.97200000000001H626.54L625.5 88.952Z" fill="#3b3b3b" stroke="none" stroke-width="1" fill-rule="evenodd"/><path d="M630.8 89.3v-3h-2.3l3.3 -3.6l3.3 3.6h-2.3v3z" fill="#f39a5a" stroke="#e06a20" stroke-width="0.6" /><path d="M644 98.6L647.57 88H650.93L654.5 98.6H651.35L650.615 96.268H647.885L647.15 98.6ZM648.41 94.148H650.09L649.25 90.968Z" fill="#3b3b3b" stroke="none" stroke-width="1" fill-rule="evenodd"/><path d="M655.4 84.3v3h-2.3l3.3 3.6l3.3 -3.6h-2.3v-3z" fill="#f39a5a" stroke="#e06a20" stroke-width="0.6" /><rect x="669" y="82.5" width="1" height="49.0" rx="0" fill="#d8d8d8" stroke="none" stroke-width="1" /><text x="558.6" y="124.8" font-size="13.5" font-weight="700" fill="#505050" font-family="Liberation Sans" letter-spacing="-0.8" stroke="#505050" stroke-width="0.5">ab</text><path d="M559.2 126.7l3 -2.7v1.7h7.6v-1.7l3 2.7l-3 2.7v-1.7h-7.6v1.7z" fill="#f6b080" stroke="#e6763a" stroke-width="0.7" /><path d="M582.4 121.8H589.2L585.8 125.20000000000003Z" fill="#000"/><path d="M601.5 120.5l6.5 -6.5l3.6 3.3l-6.5 6.5z" fill="url(#gyel)" stroke="#c8961c" stroke-width="0.6" /><path d="M601.5 120.5l3.6 3.3l-2 0.8l-2.3 -2z" fill="#9a9aa8" stroke="none" stroke-width="1" /><path d="M599.3 122.5l1.2 -1l1.2 1.2l-1.5 0.6z" fill="#e0a030" stroke="none" stroke-width="1" /><rect x="595" y="126" width="16" height="4" rx="0" fill="#ffff00" stroke="none" stroke-width="1" /><path d="M618.2 121.8H625L621.6 125.19999999999997Z" fill="#000"/><path d="M632.5 126L636.58 114H640.42L644.5 126H640.9L640.06 123.36H636.94L636.1 126ZM637.54 120.96H639.46L638.5 117.36Z" fill="#3b3b3b" stroke="none" stroke-width="1" fill-rule="evenodd"/><rect x="631" y="126" width="16" height="4" rx="0" fill="#cc1a1a" stroke="none" stroke-width="1" /><path d="M654.5 121.8H661.2L657.85 125.15000000000002Z" fill="#000"/><rect x="550" y="113.5" width="1" height="18.0" rx="0" fill="#d8d8d8" stroke="none" stroke-width="1" /><rect x="675.5" y="78.5" width="24" height="26" rx="4" fill="#d6d6d6" stroke="#c4c4c4" stroke-width="1" /><rect x="675.5" y="109.5" width="24" height="26" rx="4" fill="#d6d6d6" stroke="#c4c4c4" stroke-width="1" /><rect x="681.0" y="83.7" width="14.5" height="14.5" rx="2.5" fill="url(#gbtn)" stroke="#b2b2b2" stroke-width="1" /><rect x="683.5" y="87.3" width="10" height="1.1" rx="0" fill="#505050" stroke="none" stroke-width="1" /><rect x="683.5" y="89.3" width="5" height="1.1" rx="0" fill="#505050" stroke="none" stroke-width="1" /><rect x="706.0" y="83.7" width="14.5" height="14.5" rx="2.5" fill="url(#gbtn)" stroke="#b2b2b2" stroke-width="1" /><rect x="708.5" y="89.4" width="10" height="1.1" rx="0" fill="#505050" stroke="none" stroke-width="1" /><rect x="708.5" y="91.4" width="5" height="1.1" rx="0" fill="#505050" stroke="none" stroke-width="1" /><rect x="731.0" y="83.7" width="14.5" height="14.5" rx="2.5" fill="url(#gbtn)" stroke="#b2b2b2" stroke-width="1" /><rect x="733.5" y="92.4" width="10" height="1.1" rx="0" fill="#505050" stroke="none" stroke-width="1" /><rect x="733.5" y="94.4" width="5" height="1.1" rx="0" fill="#505050" stroke="none" stroke-width="1" /><rect x="755" y="82" width="1" height="18.5" rx="0" fill="#d8d8d8" stroke="none" stroke-width="1" /><rect x="681" y="116" width="10" height="2.6" rx="0.4" fill="#3a3a3a" stroke="none" stroke-width="1" /><rect x="681" y="120.2" width="13" height="2.6" rx="0.4" fill="#3a3a3a" stroke="none" stroke-width="1" /><rect x="681" y="124.4" width="12" height="2.6" rx="0.4" fill="#3a3a3a" stroke="none" stroke-width="1" /><rect x="708" y="116" width="10" height="2.6" rx="0.4" fill="#3a3a3a" stroke="none" stroke-width="1" /><rect x="706" y="120.2" width="14" height="2.6" rx="0.4" fill="#3a3a3a" stroke="none" stroke-width="1" /><rect x="707.5" y="124.4" width="11.0" height="2.6" rx="0.4" fill="#3a3a3a" stroke="none" stroke-width="1" /><rect x="735" y="116" width="10" height="2.6" rx="0.4" fill="#3a3a3a" stroke="none" stroke-width="1" /><rect x="732" y="120.2" width="13" height="2.6" rx="0.4" fill="#3a3a3a" stroke="none" stroke-width="1" /><rect x="733" y="124.4" width="12" height="2.6" rx="0.4" fill="#3a3a3a" stroke="none" stroke-width="1" /><rect x="757" y="116" width="12" height="2.6" rx="0.4" fill="#3a3a3a" stroke="none" stroke-width="1" /><rect x="757" y="120.2" width="12" height="2.6" rx="0.4" fill="#3a3a3a" stroke="none" stroke-width="1" /><rect x="757" y="124.4" width="12" height="2.6" rx="0.4" fill="#3a3a3a" stroke="none" stroke-width="1" /><rect x="780" y="113.5" width="1" height="18.0" rx="0" fill="#d8d8d8" stroke="none" stroke-width="1" /><circle cx="766" cy="86.9" r="1.9" fill="#c4c4c4" stroke="none" stroke-width="1" /><circle cx="766" cy="94.9" r="1.9" fill="#c4c4c4" stroke="none" stroke-width="1" /><rect x="769" y="85.2" width="10.8" height="2.4" rx="0" fill="#bdbdbd" stroke="none" stroke-width="1" /><rect x="769" y="89.2" width="7.6" height="2.4" rx="0" fill="#bdbdbd" stroke="none" stroke-width="1" /><rect x="769" y="93.2" width="9.6" height="2.4" rx="0" fill="#bdbdbd" stroke="none" stroke-width="1" /><path d="M787.4 91H793.8L790.5999999999999 94.19999999999999Z" fill="#b8b8b8"/><text x="800.6" y="90.2" font-size="7" font-weight="700" fill="#c4c4c4" font-family="Liberation Sans" >1</text><text x="800.3" y="98" font-size="7" font-weight="700" fill="#c4c4c4" font-family="Liberation Sans" >2</text><rect x="805.2" y="85.2" width="10.8" height="2.4" rx="0" fill="#bdbdbd" stroke="none" stroke-width="1" /><rect x="805.2" y="89.2" width="7.6" height="2.4" rx="0" fill="#bdbdbd" stroke="none" stroke-width="1" /><rect x="805.2" y="93.2" width="9.6" height="2.4" rx="0" fill="#bdbdbd" stroke="none" stroke-width="1" /><path d="M823.5 91H830L826.75 94.25Z" fill="#b8b8b8"/><rect x="838.5" y="85" width="6" height="1.5" rx="0" fill="#cfcfcf" stroke="none" stroke-width="1" /><rect x="838.5" y="96.5" width="6" height="1.5" rx="0" fill="#cfcfcf" stroke="none" stroke-width="1" /><path d="M838.5 89.5h3v-2.5l4 4l-4 4v-2.5h-3z" fill="#cccccc" stroke="none" stroke-width="1" /><rect x="846.5" y="83.5" width="1.5" height="2" rx="0" fill="#cfcfcf" stroke="none" stroke-width="1" /><rect x="846.5" y="85.2" width="7.6" height="1.6" rx="0" fill="#cfcfcf" stroke="none" stroke-width="1" /><rect x="846.5" y="88" width="7" height="2.4" rx="0" fill="#bdbdbd" stroke="none" stroke-width="1" /><rect x="846.5" y="92" width="6.5" height="2.4" rx="0" fill="#bdbdbd" stroke="none" stroke-width="1" /><rect x="846.5" y="96.2" width="7.6" height="1.6" rx="0" fill="#cfcfcf" stroke="none" stroke-width="1" /><rect x="863" y="85" width="6" height="1.5" rx="0" fill="#cfcfcf" stroke="none" stroke-width="1" /><rect x="863" y="96.5" width="6" height="1.5" rx="0" fill="#cfcfcf" stroke="none" stroke-width="1" /><path d="M869 89.5h-3v-2.5l-4 4l4 4v-2.5h3z" fill="#cccccc" stroke="none" stroke-width="1" /><rect x="871" y="83.5" width="1.5" height="2" rx="0" fill="#cfcfcf" stroke="none" stroke-width="1" /><rect x="871" y="85.2" width="7.6" height="1.6" rx="0" fill="#cfcfcf" stroke="none" stroke-width="1" /><rect x="871" y="88" width="7" height="2.4" rx="0" fill="#bdbdbd" stroke="none" stroke-width="1" /><rect x="871" y="92" width="6.5" height="2.4" rx="0" fill="#bdbdbd" stroke="none" stroke-width="1" /><rect x="871" y="96.2" width="7.6" height="1.6" rx="0" fill="#cfcfcf" stroke="none" stroke-width="1" /><path d="M803.5 115l3.2 3.5h-2v8h2l-3.2 3.5l-3.2 -3.5h2v-8h-2z" fill="#f07a30" stroke="#d8601a" stroke-width="0.5" /><rect x="807.2" y="116.2" width="8.8" height="2.6" rx="0.4" fill="#3a3a3a" stroke="none" stroke-width="1" /><rect x="807.2" y="121.2" width="8.8" height="2.6" rx="0.4" fill="#3a3a3a" stroke="none" stroke-width="1" /><rect x="807.2" y="126.2" width="8.8" height="2.6" rx="0.4" fill="#3a3a3a" stroke="none" stroke-width="1" /><path d="M823.4 122H830L826.7 125.30000000000001Z" fill="#000"/><path d="M841.5 117l3.3 3.3h-6.6z M841.5 128l3.3 -3.3h-6.6z M840.5 120.3h2v4.4h-2z" fill="#cfcfcf" stroke="none" stroke-width="1" /><rect x="846.2" y="114.2" width="7.8" height="2.6" rx="0" fill="#c4c4c4" stroke="none" stroke-width="1" /><rect x="846.2" y="118.2" width="7.8" height="2.6" rx="0" fill="#c4c4c4" stroke="none" stroke-width="1" /><rect x="846.2" y="123.2" width="7.8" height="2.6" rx="0" fill="#c4c4c4" stroke="none" stroke-width="1" /><rect x="846.2" y="127.2" width="7.8" height="2.6" rx="0" fill="#c4c4c4" stroke="none" stroke-width="1" /><path d="M865.5 114h2v4h2.3l-3.3 3.3l-3.3 -3.3h2.3z M865.5 130h2v-4h2.3l-3.3 -3.3l-3.3 3.3h2.3z" fill="#cfcfcf" stroke="none" stroke-width="1" /><rect x="871.2" y="114.2" width="7.8" height="2.6" rx="0" fill="#c4c4c4" stroke="none" stroke-width="1" /><rect x="871.2" y="118.2" width="7.8" height="2.6" rx="0" fill="#c4c4c4" stroke="none" stroke-width="1" /><rect x="871.2" y="123.2" width="7.8" height="2.6" rx="0" fill="#c4c4c4" stroke="none" stroke-width="1" /><rect x="871.2" y="127.2" width="7.8" height="2.6" rx="0" fill="#c4c4c4" stroke="none" stroke-width="1" /><rect x="888" y="85" width="1" height="43" rx="0" fill="#d8d8d8" stroke="none" stroke-width="1" /><path d="M914.5 84.5h20v19.5h-20z" fill="none" stroke="#333" stroke-width="1" stroke-dasharray="1.5 1.2"/><rect x="912.9" y="82.7" width="3.2" height="3.2" rx="0" fill="#f07a3a" stroke="#d86020" stroke-width="0.4" /><rect x="912.9" y="102.4" width="3.2" height="3.2" rx="0" fill="#f07a3a" stroke="#d86020" stroke-width="0.4" /><rect x="932.6999999999999" y="82.7" width="3.2" height="3.2" rx="0" fill="#f07a3a" stroke="#d86020" stroke-width="0.4" /><rect x="932.6999999999999" y="102.4" width="3.2" height="3.2" rx="0" fill="#f07a3a" stroke="#d86020" stroke-width="0.4" /><path d="M916.3 101.7L921.6719999999999 86H926.728L932.0999999999999 101.7H927.3599999999999L926.2539999999999 98.246H922.146L921.04 101.7ZM922.9359999999999 95.106H925.4639999999999L924.1999999999999 90.396Z" fill="#3d3d3d" stroke="none" stroke-width="1" fill-rule="evenodd"/><line x1="959.5" y1="96.3" x2="971" y2="85.2" stroke="#8a4fd0" stroke-width="1.2" /><rect x="957.5" y="95" width="3" height="3" rx="0" fill="#d8c0f0" stroke="#8a4fd0" stroke-width="1" /><rect x="970" y="83.2" width="3" height="3" rx="0" fill="#d8c0f0" stroke="#8a4fd0" stroke-width="1" /><g transform="translate(979.8 84.3) scale(0.72) translate(-329 -195)"><path d="M329.5 197.5C333 198 337 200.5 336 204C335 207 330 208.5 330.5 211.5C331 215 335 215.3 341 215.3" fill="none" stroke="#505558" stroke-width="2.8" /><path d="M329.5 197.5C333 198 337 200.5 336 204C335 207 330 208.5 330.5 211.5C331 215 335 215.3 341 215.3" fill="none" stroke="#a8acae" stroke-width="0.9" /><path d="M340.5 216L342.3 207.5L347 195.8Q349.5 194 352.3 197L352 202L346.5 211Z" fill="url(#gyel)" stroke="#c88a2a" stroke-width="0.7" /></g><path d="M1003.7 91.3H1009.7L1006.7 94.3Z" fill="#000"/><path d="M1020 86h5v9.9h4" fill="none" stroke="#8a4fd0" stroke-width="1.2" /><circle cx="1018.7" cy="86" r="1.4" fill="#e8d8f8" stroke="#8a4fd0" stroke-width="1" /><circle cx="1030" cy="95.9" r="1.4" fill="#e8d8f8" stroke="#8a4fd0" stroke-width="1" /><path d="M1039.5 91.3H1046L1042.75 94.55Z" fill="#000"/><rect x="1054" y="82.5" width="1" height="18.0" rx="0" fill="#d8d8d8" stroke="none" stroke-width="1" /><path d="M1063.5 87.2q3 -1.2 6 -0.8t7 0.3" fill="none" stroke="#1e1e1e" stroke-width="1.2" /><path d="M1063.5 90.2q3 -1.2 6 -0.8t7 0.3" fill="none" stroke="#555" stroke-width="1" /><path d="M1063.5 92.6q3 -0.5 6 -0.8t5 0.3" fill="none" stroke="#777" stroke-width="0.8" stroke-dasharray="1 1"/><rect x="1063" y="95.1" width="16" height="3.6" rx="0" fill="#2d5fa6" stroke="none" stroke-width="1" /><path d="M1086.3 91.3H1093L1089.65 94.65000000000002Z" fill="#000"/><rect x="957.5" y="116.5" width="15.3" height="10.3" rx="0" fill="url(#gpur)" stroke="#9a5ad0" stroke-width="1" /><path d="M988 114l7.8 7.9l-7.8 7.9l-7.8 -7.9z" fill="url(#gpur)" stroke="#a670dc" stroke-width="0.6" /><path d="M1003.7 121.9H1009.7L1006.7 124.9Z" fill="#000"/><rect x="1016" y="114" width="16" height="16" rx="0" fill="#9a5ad0" stroke="none" stroke-width="1" /><rect x="1016.9" y="114.9" width="3.8" height="4.3" rx="0" fill="url(#gpur)" stroke="#d8b8f4" stroke-width="0.5" /><rect x="1021.6" y="114.9" width="9.5" height="4.3" rx="0" fill="url(#gpur)" stroke="#d8b8f4" stroke-width="0.5" /><rect x="1016.9" y="120.1" width="3.8" height="9" rx="0" fill="url(#gpur)" stroke="#d8b8f4" stroke-width="0.5" /><rect x="1021.6" y="120.1" width="9.5" height="9" rx="0" fill="url(#gpur)" stroke="#d8b8f4" stroke-width="0.5" /><path d="M1039.5 121.9H1046L1042.75 125.15Z" fill="#000"/><rect x="1054" y="113.5" width="1" height="18.0" rx="0" fill="#d8d8d8" stroke="none" stroke-width="1" /><g transform="translate(1062.5 113.2) scale(0.66) translate(-124.5 -192.5)"><g transform="rotate(-38 139 201)"><rect x="131.5" y="195.5" width="14" height="12" rx="3" fill="url(#gbucket)" stroke="#4a4a4a" stroke-width="1.2"/><ellipse cx="132.5" cy="201.5" rx="2" ry="6" fill="#6a6a6a" stroke="#4a4a4a" stroke-width="0.8"/></g><path d="M134 203.5V196a2.5 2.5 0 0 1 5 0v5" fill="none" stroke="#4a4a4a" stroke-width="1.2" /><circle cx="138.5" cy="201" r="1.6" fill="#fff" stroke="#4a4a4a" stroke-width="1" /><path d="M134.5 205.5l1.5 -1l1 5.5h-3z" fill="#e8732a" stroke="none" stroke-width="1" /></g><rect x="1063" y="126.1" width="16" height="3.7" rx="0" fill="#6a9bd8" stroke="none" stroke-width="1" /><path d="M1086.3 121.9H1093L1089.65 125.25000000000003Z" fill="#000"/><rect x="1101" y="82.5" width="1" height="49.0" rx="0" fill="#d8d8d8" stroke="none" stroke-width="1" /><rect x="1110.5" y="82.7" width="15" height="2.2" rx="0" fill="#f4f4f4" stroke="#808080" stroke-width="1" /><rect x="1111.8" y="84.9" width="12.6" height="9" rx="0" fill="#f6f6f6" stroke="#8a8a8a" stroke-width="1" /><rect x="1114" y="87.2" width="3" height="4.5" rx="1" fill="#e9793a" stroke="none" stroke-width="1" /><rect x="1117.5" y="86.2" width="3" height="3.5" rx="1" fill="none" stroke="#9b6fd6" stroke-width="1" /><circle cx="1121" cy="93.0" r="4.8" fill="url(#ggreen)" stroke="#3a8a1a" stroke-width="0.6" /><path d="M1119.6 90.5L1123.3 93.0L1119.6 95.5Z" fill="#fff" stroke="none" stroke-width="1" /><path d="M1114 96.7h2" fill="none" stroke="#999" stroke-width="1" /><rect x="1110.5" y="113.7" width="15" height="2.2" rx="0" fill="#f4f4f4" stroke="#808080" stroke-width="1" /><rect x="1111.8" y="115.9" width="12.6" height="9" rx="0" fill="#f6f6f6" stroke="#8a8a8a" stroke-width="1" /><rect x="1114" y="118.2" width="3" height="4.5" rx="1" fill="#e9793a" stroke="none" stroke-width="1" /><rect x="1117.5" y="117.2" width="3" height="3.5" rx="1" fill="none" stroke="#9b6fd6" stroke-width="1" /><circle cx="1121" cy="124.0" r="4.8" fill="url(#ggreen)" stroke="#3a8a1a" stroke-width="0.6" /><rect x="1119.2" y="121.8" width="1.4" height="4.4" rx="0" fill="#fff" stroke="none" stroke-width="1" /><rect x="1121.4" y="121.8" width="1.4" height="4.4" rx="0" fill="#fff" stroke="none" stroke-width="1" /><path d="M1114 127.7h2" fill="none" stroke="#999" stroke-width="1" /><rect x="1822" y="80" width="1" height="54" rx="0" fill="#d8d8d8" stroke="none" stroke-width="1" /><path d="M1895.5 87.5H1906.3L1900.9 92.89999999999998Z" fill="#111"/><circle cx="1875.5" cy="120.3" r="3.6" fill="none" stroke="#b0b0b0" stroke-width="2" /><path d="M1878 125l7 5" fill="none" stroke="#9a9a9a" stroke-width="1.2" /><path d="M1879.5 130l6.5 -7.5l2 1.8l-6.5 7.5l-2.5 0.8z" fill="url(#gyel)" stroke="#d88a2a" stroke-width="0.5" /><rect x="1897.5" y="116.0" width="15" height="2.2" rx="0" fill="#f4f4f4" stroke="#808080" stroke-width="1" /><rect x="1898.8" y="118.2" width="12.6" height="9" rx="0" fill="#f6f6f6" stroke="#8a8a8a" stroke-width="1" /><rect x="1901" y="120.5" width="3" height="4.5" rx="1" fill="#e9793a" stroke="none" stroke-width="1" /><rect x="1904.5" y="119.5" width="3" height="3.5" rx="1" fill="none" stroke="#9b6fd6" stroke-width="1" /><circle cx="1908" cy="126.3" r="4.8" fill="url(#ggreen)" stroke="#3a8a1a" stroke-width="0.6" /><path d="M1906.6 123.8L1910.3 126.3L1906.6 128.8Z" fill="#fff" stroke="none" stroke-width="1" /><path d="M1901 130.0h2" fill="none" stroke="#999" stroke-width="1" /><rect x="9.5" y="156.3" width="21" height="17" rx="0" fill="url(#gslide)" stroke="#a6a6a6" stroke-width="1" /><rect x="9" y="155.8" width="4" height="18" rx="0.8" fill="#f07d32" stroke="none" stroke-width="1" /><rect x="14" y="158.8" width="4" height="1" rx="0" fill="#9a9a9a" stroke="none" stroke-width="1" /><rect x="19" y="158.8" width="2" height="1" rx="0" fill="#9a9a9a" stroke="none" stroke-width="1" /><rect x="22.5" y="158.8" width="1" height="1" rx="0" fill="#9a9a9a" stroke="none" stroke-width="1" /><rect x="24" y="158.8" width="2" height="1" rx="0" fill="#9a9a9a" stroke="none" stroke-width="1" /><rect x="14" y="162.8" width="2" height="1" rx="0" fill="#9a9a9a" stroke="none" stroke-width="1" /><rect x="14" y="164.8" width="1" height="1" rx="0" fill="#9a9a9a" stroke="none" stroke-width="1" /><rect x="16" y="164.8" width="1" height="1" rx="0" fill="#9a9a9a" stroke="none" stroke-width="1" /><rect x="14" y="166.8" width="2" height="1" rx="0" fill="#9a9a9a" stroke="none" stroke-width="1" /><rect x="14" y="168.8" width="2" height="1" rx="0" fill="#9a9a9a" stroke="none" stroke-width="1" /><rect x="17" y="168.8" width="1" height="1" rx="0" fill="#9a9a9a" stroke="none" stroke-width="1" /><circle cx="23.4" cy="165.3" r="3.8" fill="#f6c3a0" stroke="none" stroke-width="1" /><path d="M23.4 165.3h3.8a3.8 3.8 0 0 1 -1.2 2.8z" fill="#f07d32" stroke="none" stroke-width="1" /><path d="M24.4 167.7h4.4v3h3v4.4h-3v3h-4.4v-3h-3v-4.4h3z" fill="#7fcf45" stroke="#4aa526" stroke-width="0.9" /><path d="M39.5 165H46.2L42.85 168.35Z" fill="#000"/><rect x="55.5" y="156.3" width="21" height="17" rx="0" fill="url(#gslide)" stroke="#a6a6a6" stroke-width="1" /><rect x="55" y="155.8" width="4" height="18" rx="0.8" fill="#f07d32" stroke="none" stroke-width="1" /><rect x="60" y="158.8" width="4" height="1" rx="0" fill="#9a9a9a" stroke="none" stroke-width="1" /><rect x="65" y="158.8" width="2" height="1" rx="0" fill="#9a9a9a" stroke="none" stroke-width="1" /><rect x="68.5" y="158.8" width="1" height="1" rx="0" fill="#9a9a9a" stroke="none" stroke-width="1" /><rect x="70" y="158.8" width="2" height="1" rx="0" fill="#9a9a9a" stroke="none" stroke-width="1" /><rect x="60" y="162.8" width="2" height="1" rx="0" fill="#9a9a9a" stroke="none" stroke-width="1" /><rect x="60" y="164.8" width="1" height="1" rx="0" fill="#9a9a9a" stroke="none" stroke-width="1" /><rect x="62" y="164.8" width="1" height="1" rx="0" fill="#9a9a9a" stroke="none" stroke-width="1" /><rect x="60" y="166.8" width="2" height="1" rx="0" fill="#9a9a9a" stroke="none" stroke-width="1" /><rect x="60" y="168.8" width="2" height="1" rx="0" fill="#9a9a9a" stroke="none" stroke-width="1" /><rect x="63" y="168.8" width="1" height="1" rx="0" fill="#9a9a9a" stroke="none" stroke-width="1" /><circle cx="69.4" cy="165.3" r="3.8" fill="#f6c3a0" stroke="none" stroke-width="1" /><path d="M69.4 165.3h3.8a3.8 3.8 0 0 1 -1.2 2.8z" fill="#f07d32" stroke="none" stroke-width="1" /><rect x="63.5" y="163.5" width="13.5" height="11.5" rx="0" fill="url(#gslide)" stroke="#a6a6a6" stroke-width="1" /><rect x="63" y="163" width="2.5" height="12" rx="0" fill="#f07d32" stroke="none" stroke-width="1" /><circle cx="72" cy="169" r="2.6" fill="#f6c3a0" stroke="none" stroke-width="1" /><path d="M72 169h2.6a2.6 2.6 0 0 1 -0.8 1.9z" fill="#f07d32" stroke="none" stroke-width="1" /><path d="M60 164a5 5 0 0 0 1.5 8.5l-1 1.8l5.5 -0.3l-2.3 -4.6l-0.8 1.4a3 3 0 0 1 0 -5.5z" fill="#3d8ee0" stroke="#2a6fc0" stroke-width="0.5" /><rect x="88.5" y="156.3" width="21" height="17" rx="0" fill="url(#gslide)" stroke="#a6a6a6" stroke-width="1" /><rect x="88" y="155.8" width="4" height="18" rx="0.8" fill="#f07d32" stroke="none" stroke-width="1" /><rect x="93" y="158.8" width="4" height="1" rx="0" fill="#9a9a9a" stroke="none" stroke-width="1" /><rect x="98" y="158.8" width="2" height="1" rx="0" fill="#9a9a9a" stroke="none" stroke-width="1" /><rect x="101.5" y="158.8" width="1" height="1" rx="0" fill="#9a9a9a" stroke="none" stroke-width="1" /><rect x="103" y="158.8" width="2" height="1" rx="0" fill="#9a9a9a" stroke="none" stroke-width="1" /><rect x="93" y="162.8" width="2" height="1" rx="0" fill="#9a9a9a" stroke="none" stroke-width="1" /><rect x="93" y="164.8" width="1" height="1" rx="0" fill="#9a9a9a" stroke="none" stroke-width="1" /><rect x="95" y="164.8" width="1" height="1" rx="0" fill="#9a9a9a" stroke="none" stroke-width="1" /><rect x="93" y="166.8" width="2" height="1" rx="0" fill="#9a9a9a" stroke="none" stroke-width="1" /><rect x="93" y="168.8" width="2" height="1" rx="0" fill="#9a9a9a" stroke="none" stroke-width="1" /><rect x="96" y="168.8" width="1" height="1" rx="0" fill="#9a9a9a" stroke="none" stroke-width="1" /><circle cx="102.4" cy="165.3" r="3.8" fill="#f6c3a0" stroke="none" stroke-width="1" /><path d="M102.4 165.3h3.8a3.8 3.8 0 0 1 -1.2 2.8z" fill="#f07d32" stroke="none" stroke-width="1" /><path d="M101.5 168.5l8 8M109.5 168.5l-8 8" fill="none" stroke="#c21c1c" stroke-width="3.2" /><path d="M101.5 168.5l8 8M109.5 168.5l-8 8" fill="none" stroke="#e44a4a" stroke-width="1.4" /><rect x="119" y="150" width="1" height="32.5" rx="0" fill="#d8d8d8" stroke="none" stroke-width="1" /><rect x="127.5" y="158.5" width="21" height="17" rx="0" fill="#f2f2f2" stroke="#9a9a9a" stroke-width="1" /><rect x="130.5" y="161" width="15" height="2.2" rx="0" fill="#ef7f3a" stroke="none" stroke-width="1" /><rect x="130.5" y="165.5" width="15" height="3" rx="0" fill="#fff" stroke="#a0a0a0" stroke-width="0.8" /><rect x="130.5" y="170.5" width="7" height="3" rx="0" fill="#fff" stroke="#a0a0a0" stroke-width="0.8" /><rect x="138.5" y="170.5" width="7" height="3" rx="0" fill="#fff" stroke="#a0a0a0" stroke-width="0.8" /><path d="M157 165H164.2L160.6 168.6Z" fill="#000"/><rect x="4.5" y="188.5" width="32" height="34" rx="4" fill="#d6d6d6" stroke="#c4c4c4" stroke-width="1" /><path d="M17 196.5v14.5l3.3 -3.2l2.6 5.3l2.1 -1l-2.5 -5.2h4.6z" fill="#262626" stroke="#f0f0f0" stroke-width="0.6" /><rect x="45.5" y="196.5" width="17" height="17" rx="2" fill="#f4f4f4" stroke="#b4b4b4" stroke-width="1" /><path d="M48 202v-3h3M57 199h3v3M60 208v3h-3M51 211h-3v-3" fill="none" stroke="#b4b4b4" stroke-width="1.2" /><rect x="74" y="189" width="1" height="33" rx="0" fill="#d8d8d8" stroke="none" stroke-width="1" /><path d="M84 199.5q4 -1.5 8 -1t9 0.5" fill="none" stroke="#1e1e1e" stroke-width="1.6" /><path d="M84 203.5q4 -1.5 8 -1t9 0.5" fill="none" stroke="#555" stroke-width="1.3" /><path d="M84 206.5q4 -0.6 8 -1t7 0.5" fill="none" stroke="#666" stroke-width="1.1" stroke-dasharray="1.3 1.2"/><rect x="81" y="210.5" width="24" height="6.5" rx="0" fill="#2d5fa6" stroke="none" stroke-width="1" /><path d="M111.8 204.5H118.8L115.3 208.0Z" fill="#000"/><g transform="rotate(-38 139 201)"><rect x="131.5" y="195.5" width="14" height="12" rx="3" fill="url(#gbucket)" stroke="#4a4a4a" stroke-width="1"/><ellipse cx="132.5" cy="201.5" rx="2" ry="6" fill="#6a6a6a" stroke="#4a4a4a" stroke-width="0.8"/></g><path d="M134 203.5V196a2.5 2.5 0 0 1 5 0v5" fill="none" stroke="#4a4a4a" stroke-width="1" /><circle cx="138.5" cy="201" r="1.6" fill="#fff" stroke="#4a4a4a" stroke-width="0.9" /><path d="M134.5 205.5l1.5 -1l1 5.5h-3z" fill="#e8732a" stroke="none" stroke-width="1" /><ellipse cx="137.5" cy="210.3" rx="8.5" ry="1.2" fill="#e8732a"/><rect x="124.5" y="210.5" width="24.5" height="6.5" rx="0" fill="#6a9bd8" stroke="none" stroke-width="1" /><path d="M156.3 204.5H163.3L159.8 208.0Z" fill="#000"/><rect x="170" y="189" width="1" height="33" rx="0" fill="#d8d8d8" stroke="none" stroke-width="1" /><line x1="185.5" y1="213" x2="200" y2="197.5" stroke="#8a4fd0" stroke-width="1.3" /><rect x="183" y="211" width="4" height="4" rx="0" fill="#dcc4f4" stroke="#8a4fd0" stroke-width="1" /><rect x="198.5" y="195.5" width="4" height="4" rx="0" fill="#dcc4f4" stroke="#8a4fd0" stroke-width="1" /><rect x="215" y="198" width="18" height="15" rx="0" fill="url(#gpur)" stroke="#9a5ad0" stroke-width="1" /><ellipse cx="256.8" cy="205.9" rx="9.2" ry="7.7" fill="url(#gpur)" stroke="#9a5ad0" stroke-width="1"/><rect x="277" y="189" width="1" height="33" rx="0" fill="#d8d8d8" stroke="none" stroke-width="1" /><line x1="286" y1="204.6" x2="302" y2="204.6" stroke="#8a4fd0" stroke-width="1.3" /><path d="M302 201.3l5.5 3.3l-5.5 3.3z" fill="#d4b8f2" stroke="#8a4fd0" stroke-width="1" /><path d="M314.5 204.5H322.5L318.5 208.5Z" fill="#000"/><path d="M329.5 197.5C333 198 337 200.5 336 204C335 207 330 208.5 330.5 211.5C331 215 335 215.3 341 215.3" fill="none" stroke="#505558" stroke-width="2.8" /><path d="M329.5 197.5C333 198 337 200.5 336 204C335 207 330 208.5 330.5 211.5C331 215 335 215.3 341 215.3" fill="none" stroke="#a8acae" stroke-width="0.9" /><path d="M340.5 216L342.3 207.5L347 195.8Q349.5 194 352.3 197L352 202L346.5 211Z" fill="url(#gyel)" stroke="#c88a2a" stroke-width="0.7" /><path d="M340.5 216L341.5 212.5L343.5 213.5Z" fill="#222" stroke="none" stroke-width="1" /><path d="M359.3 204.5H366.3L362.8 208.0Z" fill="#000"/><path d="M376.5 198.3h7.2v14.1h7" fill="none" stroke="#8a4fd0" stroke-width="1.3" /><circle cx="376.4" cy="198.3" r="2.2" fill="#c9a6ef" stroke="#9a62d8" stroke-width="0.8" /><circle cx="390.5" cy="212.4" r="2.2" fill="#c9a6ef" stroke="#9a62d8" stroke-width="0.8" /><path d="M403 204.5H410L406.5 208.0Z" fill="#000"/><rect x="417" y="189" width="1" height="33" rx="0" fill="#d8d8d8" stroke="none" stroke-width="1" /><path d="M435.8 194.5l10 10l-10 10l-10 -10z" fill="url(#gpur)" stroke="#a670dc" stroke-width="0.6" /><path d="M455 204.5H462L458.5 208.0Z" fill="#000"/><circle cx="479.8" cy="205" r="8.5" fill="url(#gpur)" stroke="#a670dc" stroke-width="0.6" /><circle cx="477" cy="201.8" r="1.5" fill="#c49af0" stroke="#9a62d8" stroke-width="0.5" /><circle cx="482.8" cy="201.8" r="1.5" fill="#c49af0" stroke="#9a62d8" stroke-width="0.5" /><path d="M475 206.5h9.8q-0.6 4 -4.9 4t-4.9 -4z" fill="#fff" stroke="none" stroke-width="1" /><path d="M499.5 204.5H506.3L502.9 207.9Z" fill="#000"/><path d="M515.8 204.8l5 -4.3v2.6h7.5v-2.6l5 4.3l-5 4.3v-2.6h-7.5v2.6z" fill="url(#gpur)" stroke="#9a5ad0" stroke-width="0.6" /><path d="M543.3 204.5H550L546.65 207.85000000000002Z" fill="#000"/><rect x="559" y="196" width="17.8" height="17.7" rx="0" fill="#9a5ad0" stroke="none" stroke-width="1" /><rect x="560" y="197" width="5" height="6.2" rx="0" fill="url(#gpur)" stroke="#d8b8f4" stroke-width="0.6" /><rect x="566.2" y="197" width="9.6" height="6.2" rx="0" fill="url(#gpur)" stroke="#d8b8f4" stroke-width="0.6" /><rect x="560" y="204.2" width="5" height="8.5" rx="0" fill="url(#gpur)" stroke="#d8b8f4" stroke-width="0.6" /><rect x="566.2" y="204.2" width="9.6" height="8.5" rx="0" fill="url(#gpur)" stroke="#d8b8f4" stroke-width="0.6" /><path d="M587 204.5H593.8L590.4 207.89999999999998Z" fill="#000"/><path d="M604.5 196h15q1.5 0 1.5 1.5v11q0 1.5 -1.5 1.5h-9l-4 4.5v-4.5h-2q-1.5 0 -1.5 -1.5v-11q0 -1.5 1.5 -1.5z" fill="url(#gpur)" stroke="#9a5ad0" stroke-width="0.6" /><path d="M631.3 204.5H638L634.65 207.85000000000002Z" fill="#000"/><path d="M656 196l2.6 5.6l6 0.6l-4.5 4l1.3 6l-5.4 -3.1l-5.4 3.1l1.3 -6l-4.5 -4l6 -0.6z" fill="url(#gpur)" stroke="#9a5ad0" stroke-width="0.5" /><path d="M675 204.5H682L678.5 208.0Z" fill="#000"/><path d="M689 198.5l11 -5.5l11 5.5v11.5l-11 4.5l-11 -4.5z" fill="#c89af0" stroke="#a670dc" stroke-width="0.6" /><path d="M689 198.5l11 4.5l11 -4.5M700 203v11.5" fill="none" stroke="#e8d4fa" stroke-width="0.8" /><path d="M700 203l11 -4.5v11.5l-11 4.5z" fill="#b07ce6" stroke="none" stroke-width="1" /><path d="M719.3 204.5H726.3L722.8 208.0Z" fill="#000"/><rect x="733" y="189.5" width="1" height="31.5" rx="0" fill="#d8d8d8" stroke="none" stroke-width="1" /><path d="M753.1 198.1L760.6 205.8L754.6 211.6L747.3 203.7Z" fill="url(#gpur)" stroke="#9a5ad0" stroke-width="0.7" /><path d="M753.5 196.5Q760 194 762.5 200.5" fill="none" stroke="#5aa8f0" stroke-width="2.2" /><path d="M759.5 200.5L765.5 199.5L763.3 205.2Z" fill="#5aa8f0" stroke="none" stroke-width="1" /><path d="M754.5 213.5Q747.5 216 745 209.5" fill="none" stroke="#5aa8f0" stroke-width="2.2" /><path d="M748 209.5L742 210.5L744.2 204.8Z" fill="#5aa8f0" stroke="none" stroke-width="1" /><rect x="774.5" y="195" width="2" height="20.5" rx="0" fill="#cfcfcf" stroke="none" stroke-width="1" /><rect x="777" y="197.5" width="10" height="6" rx="0" fill="#d4d4d4" stroke="none" stroke-width="1" /><rect x="777" y="207" width="17" height="6.5" rx="0" fill="#d4d4d4" stroke="none" stroke-width="1" /><path d="M804.2 205H811.2L807.7 208.5Z" fill="#bdbdbd"/><rect x="818" y="197" width="22" height="2.5" rx="0" fill="#cfcfcf" stroke="none" stroke-width="1" /><rect x="818" y="201.5" width="10" height="1.5" rx="0" fill="#d6d6d6" stroke="none" stroke-width="1" /><rect x="818" y="204.5" width="10" height="1.5" rx="0" fill="#d6d6d6" stroke="none" stroke-width="1" /><rect x="818" y="207.5" width="10" height="1.5" rx="0" fill="#d6d6d6" stroke="none" stroke-width="1" /><rect x="818" y="210.5" width="10" height="1.5" rx="0" fill="#d6d6d6" stroke="none" stroke-width="1" /><path d="M834 200.5l5 5h-3v7.5h-4v-7.5h-3z" fill="#c4c4c4" stroke="none" stroke-width="1" /><path d="M848.2 205H855.2L851.7 208.5Z" fill="#bdbdbd"/><rect x="866" y="193.8" width="2" height="21" rx="0" fill="#d0d0d0" stroke="none" stroke-width="1" /><rect x="878" y="193.8" width="2" height="21" rx="0" fill="#d0d0d0" stroke="none" stroke-width="1" /><rect x="864" y="198" width="6" height="13" rx="0" fill="#dadada" stroke="#c8c8c8" stroke-width="0.6" /><rect x="876" y="196" width="6" height="17" rx="0" fill="#dadada" stroke="#c8c8c8" stroke-width="0.6" /><path d="M891.2 205H898.2L894.7 208.5Z" fill="#bdbdbd"/><rect x="906" y="189" width="1" height="32.69999999999999" rx="0" fill="#d8d8d8" stroke="none" stroke-width="1" /><rect x="922" y="201" width="15" height="12.5" rx="0" fill="#c4c4c4" stroke="none" stroke-width="1" /><rect x="918.5" y="197.5" width="15" height="12" rx="0" fill="url(#gpur)" stroke="#8a4fd0" stroke-width="1" /><path d="M952.5 194v17.5h17.5M949.5 198h17.5v17.5" fill="none" stroke="#d0d0d0" stroke-width="2.4" /><rect x="979.5" y="195.5" width="23" height="18.5" rx="0" fill="#d2d2d2" stroke="#c8c8c8" stroke-width="0.6" /><path d="M990 196l7 18" fill="none" stroke="#e0e0e0" stroke-width="1.2" /><path d="M1010.8 205H1017L1013.9 208.10000000000002Z" fill="#bdbdbd"/><rect x="1024" y="189" width="1" height="32.69999999999999" rx="0" fill="#d8d8d8" stroke="none" stroke-width="1" /><path d="M1033.5 198.5h4M1045 198.5h8" fill="none" stroke="#909090" stroke-width="1.4" /><rect x="1037.5" y="195.5" width="5.5" height="5" rx="0" fill="#6aa8ef" stroke="#2a70c8" stroke-width="0.8" /><path d="M1040 198.5v16.5l3.8 -3.5l3 1.2l1.8 -1.2l-6 -4h6z" fill="#2a2a2a" stroke="none" stroke-width="1" /><path d="M1067 215.5l3.5 -6.5l12 -12l6.5 6l-12 12z" fill="url(#gyel)" stroke="#d8a228" stroke-width="0.9" /><path d="M1067 215.5l3.5 -6.5l3.3 3l3 3z" fill="#dcdcdc" stroke="#888" stroke-width="0.6" /><path d="M1082.5 197l3 -3.5l4 4l-3.5 3z" fill="#f8d060" stroke="#d8a228" stroke-width="0.6" /><path d="M1102 197.5l2.5 -2.5h16.5v16.5l-2.5 2.5h-16.5z" fill="#dedede" stroke="#cfcfcf" stroke-width="0.8" /><path d="M1108.5 209l3.5 -4l3.5 4h-2v7h-3v-7z" fill="#c8c8c8" stroke="none" stroke-width="1" /><path d="M189.2 238.5l6.3 7M195.5 238.5l-6.3 7" fill="none" stroke="#31363b" stroke-width="1.2" /><path d="M206.5 619.5l-3.5 3.5l3.5 3.5z" fill="#fff" stroke="none" stroke-width="1" /><path d="M1917.5 619.5l-3.5 3.5l3.5 3.5z" fill="#fff" stroke="none" stroke-width="1" /><path d="M1056 1032.5h11v7h-8.5" fill="none" stroke="#888" stroke-width="0.8" stroke-dasharray="1 1"/><path d="M1054 1031.5h4M1056 1029.5v4" fill="none" stroke="#f07a30" stroke-width="1.1" /><path d="M1161 1033.5h11v7h-11z" fill="none" stroke="#888" stroke-width="0.8" stroke-dasharray="1 1"/><path d="M1159 1039.5v3M1158.5 1042h3" fill="none" stroke="#f07a30" stroke-width="1.1" /><path d="M1161 1031.5h11" fill="none" stroke="#f07a30" stroke-width="0.9" /><rect x="1269.5" y="1031.5" width="8" height="9" rx="0" fill="#f2f2f2" stroke="#999" stroke-width="0.8" /><circle cx="1277" cy="1038" r="3" fill="#d42a2a" stroke="none" stroke-width="1" /><path d="M1715.6 1030.5v12M1709.6 1036.5h12" fill="none" stroke="#31363b" stroke-width="1.4" /><path d="M1715.6 1030l-2.4 2.6h4.8zM1715.6 1043l-2.4 -2.6h4.8zM1709.2 1036.5l2.6 -2.4v4.8zM1722 1036.5l-2.6 -2.4v4.8z" fill="#31363b" stroke="none" stroke-width="1" /><circle cx="1740.3" cy="1036.6" r="5.2" fill="none" stroke="#555" stroke-width="1" /><rect x="1737.5" y="1036.1" width="5.6" height="1" rx="0" fill="#555" stroke="none" stroke-width="1" /><rect x="1751" y="1036.2" width="97.6" height="1" rx="0" fill="#9a9a9a" stroke="none" stroke-width="1" /><circle cx="1799.8" cy="1036.6" r="4.8" fill="#e4e4e4" stroke="#a6a6a6" stroke-width="1" /><circle cx="1859.3" cy="1036.6" r="5.2" fill="none" stroke="#555" stroke-width="1" /><rect x="1856.5" y="1036.1" width="5.6" height="1" rx="0" fill="#555" stroke="none" stroke-width="1" /><rect x="1858.8" y="1033.8" width="1" height="5.6" rx="0" fill="#555" stroke="none" stroke-width="1" /></svg>
</body></html>
